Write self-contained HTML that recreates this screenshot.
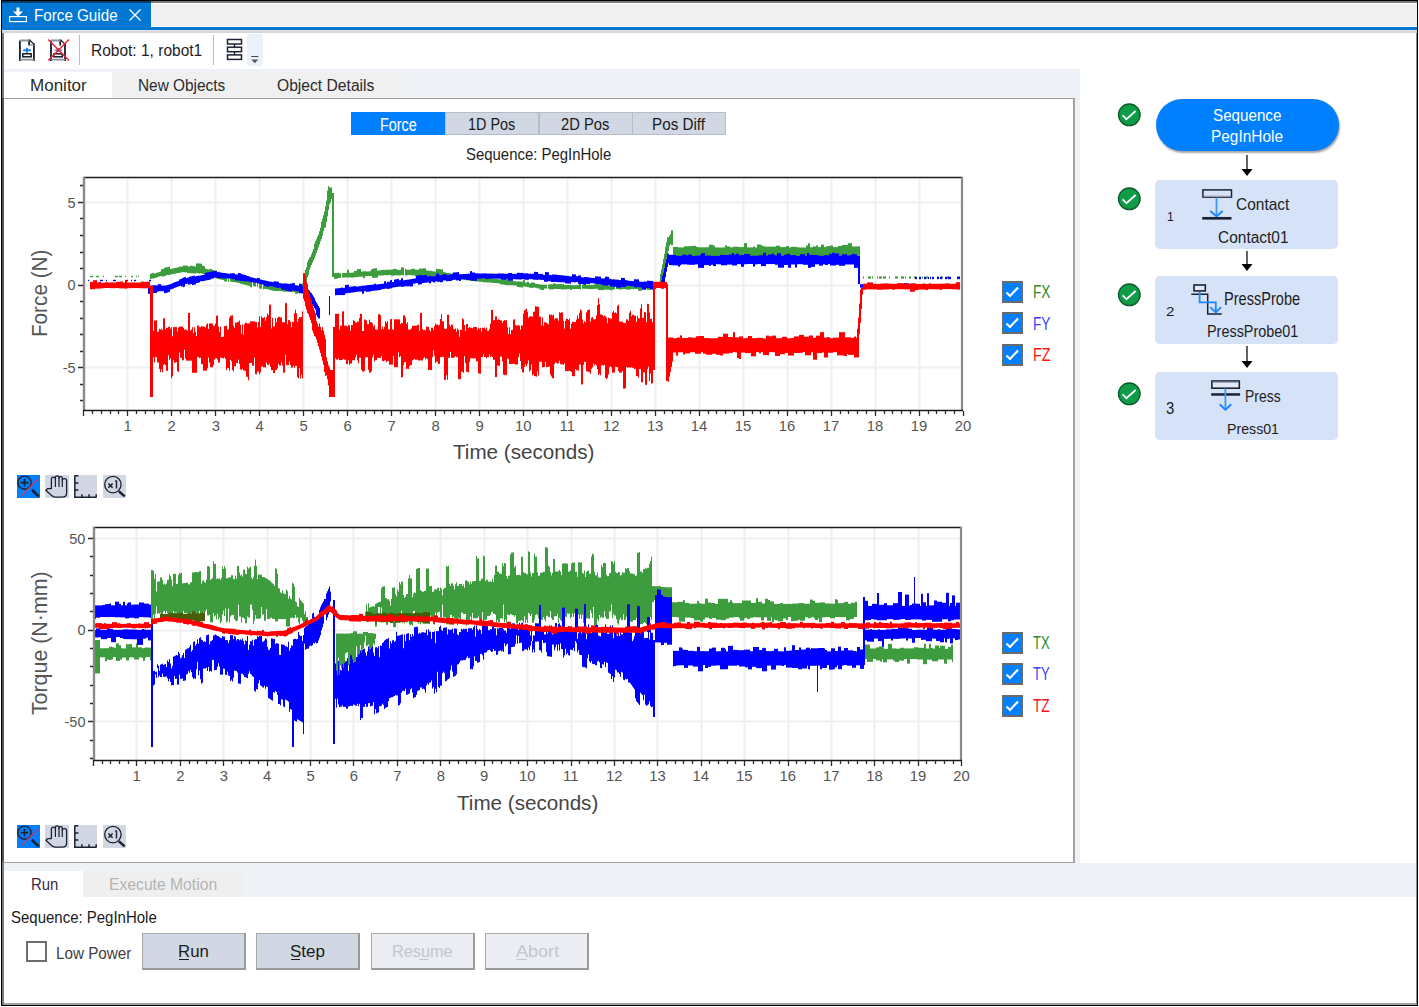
<!DOCTYPE html><html><head><meta charset="utf-8"><style>html,body{margin:0;padding:0}body{width:1419px;height:1007px;position:relative;overflow:hidden;background:#fff;font-family:"Liberation Sans",sans-serif}body>div,body>svg{position:absolute}.t{white-space:nowrap;transform-origin:0 0}</style></head><body><div style="left:2px;top:1px;width:1415px;height:2px;background:#7a7a7a;"></div><div style="left:2px;top:3px;width:1415px;height:24px;background:#ffffff;"></div><div style="left:152px;top:4px;width:1265px;height:22px;background:#f0f0f0;"></div><div style="left:2px;top:1px;width:149px;height:2px;background:#00406e;"></div><div style="left:2px;top:3px;width:149px;height:24px;background:#0078d4;"></div><div style="left:2px;top:27px;width:1415px;height:3px;background:#0078d4;"></div><div style="left:2px;top:30px;width:1415px;height:1px;background:#ece6e3;"></div><div style="left:2px;top:31px;width:1415px;height:2px;background:#d5d6da;"></div><div style="left:1px;top:0px;width:1417px;height:1px;background:#000;"></div><div style="left:1px;top:0px;width:1px;height:1006px;background:#000;"></div><div style="left:1417px;top:0px;width:1px;height:1006px;background:#000;"></div><div style="left:1px;top:1005px;width:1417px;height:1px;background:#000;"></div><div style="left:2px;top:33px;width:2px;height:972px;background:#7b7c80;"></div><div style="left:2px;top:98px;width:2px;height:764px;background:#555555;"></div><div style="left:1416px;top:33px;width:1px;height:972px;background:#8a8a8e;"></div><div style="left:4px;top:1003px;width:1412px;height:2px;background:#a2a3a6;"></div><svg style="left:8px;top:6px" width="20" height="18" viewBox="0 0 20 18"><path d="M8.5 1.5h3v4h3.5l-5 5-5-5h3.5z" fill="#fff"/><rect x="1.6" y="10.6" width="16.8" height="5" fill="none" stroke="#fff" stroke-width="1.2"/><path d="M10 10v1" stroke="#fff"/></svg><div class="t" style="left:33.98px;top:7.46px;font-size:17.30px;line-height:17.30px;color:#ffffff;transform:scaleX(0.8790);">Force Guide</div><svg style="left:127px;top:7px" width="16" height="16" viewBox="0 0 16 16"><path d="M2.5 2.5l11 11M13.5 2.5l-11 11" stroke="#fff" stroke-width="1.3"/></svg><svg style="left:18px;top:38px" width="18" height="24" viewBox="0 0 18 24"><path d="M1.9 2.5v20.5M15.9 5.5v17.5M11.1 1.6v6" stroke="#141c2c" stroke-width="1.8" fill="none"/><path d="M1.9 2.5h10.5M1.9 21.7h14" stroke="#8a909c" stroke-width="1.8" fill="none"/><path d="M11.5 2l4.6 4.4" stroke="#141c2c" stroke-width="1.3"/><path d="M11.1 7.1h4.8" stroke="#8a909c" stroke-width="1.4"/><path d="M9 9.8v5M5.2 12.3h7.7" stroke="#1a80ff" stroke-width="2"/><rect x="4.8" y="15.8" width="8.4" height="3" fill="#fff" stroke="#141c2c" stroke-width="1.5"/></svg><svg style="left:47px;top:38px" width="24" height="24" viewBox="0 0 24 24"><path d="M4 2.5v20.5M18 5.5v17.5M13.2 1.6v6" stroke="#141c2c" stroke-width="1.8" fill="none"/><path d="M4 2.5h10.5M4 21.7h14" stroke="#8a909c" stroke-width="1.8" fill="none"/><path d="M13.6 2l4.6 4.4" stroke="#141c2c" stroke-width="1.3"/><path d="M7.6 12.3h7.7" stroke="#5ab0ff" stroke-width="2"/><rect x="6.9" y="15.8" width="8.4" height="3" fill="#fff" stroke="#141c2c" stroke-width="1.5"/><path d="M1.2 1.5l20.8 21M22 1.5l-20.8 21" stroke="#e8243c" stroke-width="1.5"/><rect x="9.6" y="10.2" width="3.2" height="3.5" fill="#e8243c"/></svg><div style="left:79px;top:35px;width:1px;height:30px;background:#b8bcc4;"></div><div class="t" style="left:90.56px;top:42.77px;font-size:16.57px;line-height:16.57px;color:#1e1e1e;transform:scaleX(0.9361);">Robot: 1, robot1</div><div style="left:213px;top:35px;width:1px;height:30px;background:#b8bcc4;"></div><svg style="left:226px;top:38px" width="18" height="24" viewBox="0 0 18 24"><rect x="1.5" y="1.5" width="14" height="4.5" fill="none" stroke="#1b2233" stroke-width="1.5"/><rect x="1.5" y="9.2" width="14" height="4.5" fill="none" stroke="#1b2233" stroke-width="1.5"/><rect x="1.5" y="16.9" width="14" height="4.5" fill="none" stroke="#1b2233" stroke-width="1.5"/><path d="M8.5 6v3.2M8.5 13.7v3.2" stroke="#1b2233" stroke-width="1.5"/></svg><div style="left:247px;top:34px;width:16px;height:32px;background:#eaf1fb;border-radius:3px"></div><svg style="left:249px;top:55px" width="12" height="10" viewBox="0 0 12 10"><path d="M2.3 1.5h7" stroke="#444" stroke-width="1"/><path d="M2.3 4.6h7l-3.5 3.6z" fill="#555"/></svg><div style="left:4px;top:69px;width:1076px;height:3px;background:#eef1f6;"></div><div style="left:4px;top:72px;width:108px;height:26px;background:#ffffff;"></div><div style="left:112px;top:72px;width:289px;height:26px;background:#f0f0f0;"></div><div style="left:401px;top:72px;width:679px;height:26px;background:#eef1f6;"></div><div class="t" style="left:30.24px;top:76.56px;font-size:17.30px;line-height:17.30px;color:#2b2b2b;transform:scaleX(0.9850);">Monitor</div><div class="t" style="left:138.27px;top:76.56px;font-size:17.30px;line-height:17.30px;color:#2b2b2b;transform:scaleX(0.8907);">New Objects</div><div class="t" style="left:277.22px;top:76.56px;font-size:17.30px;line-height:17.30px;color:#2b2b2b;transform:scaleX(0.9054);">Object Details</div><div style="left:4px;top:98px;width:1071px;height:1px;background:#a0a0a0;"></div><div style="left:1073px;top:98px;width:2px;height:765px;background:#a3a3a3;"></div><div style="left:4px;top:862px;width:1071px;height:1px;background:#a0a0a0;"></div><div style="left:1075px;top:72px;width:5px;height:791px;background:#eef1f6;"></div><div style="left:351px;top:112px;width:94px;height:23px;background:#007fff;"></div><div class="t" style="left:379.85px;top:117.24px;font-size:17.44px;line-height:17.44px;color:#ffffff;transform:scaleX(0.8258);">Force</div><div style="left:445px;top:112px;width:94px;height:23px;background:#d1d7e3;box-sizing:border-box;border:1px solid #b7bcc6"></div><div class="t" style="left:468.05px;top:116.36px;font-size:17.30px;line-height:17.30px;color:#1b1b1b;transform:scaleX(0.8343);">1D Pos</div><div style="left:539px;top:112px;width:94px;height:23px;background:#d1d7e3;box-sizing:border-box;border:1px solid #b7bcc6"></div><div class="t" style="left:561.26px;top:116.36px;font-size:17.30px;line-height:17.30px;color:#1b1b1b;transform:scaleX(0.8518);">2D Pos</div><div style="left:632px;top:112px;width:94px;height:23px;background:#d1d7e3;box-sizing:border-box;border:1px solid #b7bcc6"></div><div class="t" style="left:652.18px;top:116.36px;font-size:17.30px;line-height:17.30px;color:#1b1b1b;transform:scaleX(0.8816);">Pos Diff</div><div class="t" style="left:466.05px;top:145.68px;font-size:17.15px;line-height:17.15px;color:#1e1e1e;transform:scaleX(0.8706);">Sequence: PegInHole</div><div style="left:4px;top:863px;width:1412px;height:8px;background:#eef1f6;"></div><div style="left:4px;top:871px;width:79px;height:26px;background:#ffffff;"></div><div style="left:83px;top:871px;width:160px;height:26px;background:#efefef;"></div><div style="left:243px;top:871px;width:1173px;height:26px;background:#eef1f6;"></div><div class="t" style="left:30.50px;top:877.39px;font-size:15.84px;line-height:15.84px;color:#3a2a4a;transform:scaleX(0.9449);">Run</div><div class="t" style="left:109.24px;top:877.39px;font-size:15.84px;line-height:15.84px;color:#b4b4b4;transform:scaleX(0.9912);">Execute Motion</div><div class="t" style="left:10.55px;top:909.67px;font-size:16.57px;line-height:16.57px;color:#1a1a1a;transform:scaleX(0.9043);">Sequence: PegInHole</div><div style="left:26px;top:941px;width:21px;height:21px;background:transparent;box-sizing:border-box;border:2px solid #6e6e6e"></div><div class="t" style="left:56.48px;top:944.80px;font-size:16.42px;line-height:16.42px;color:#404040;transform:scaleX(0.9290);">Low Power</div><div style="left:142px;top:933px;width:104px;height:37px;background:#d1d7e3;box-sizing:border-box;border:1px solid #a9a9a9;border-right:2px solid #9a9a9a;border-bottom:2px solid #9a9a9a"></div><div style="left:256px;top:933px;width:104px;height:37px;background:#d1d7e3;box-sizing:border-box;border:1px solid #a9a9a9;border-right:2px solid #9a9a9a;border-bottom:2px solid #9a9a9a"></div><div style="left:371px;top:933px;width:104px;height:37px;background:#ebedf2;box-sizing:border-box;border:1px solid #a9a9a9;border-right:2px solid #9a9a9a;border-bottom:2px solid #9a9a9a"></div><div style="left:485px;top:933px;width:104px;height:37px;background:#ebedf2;box-sizing:border-box;border:1px solid #a9a9a9;border-right:2px solid #9a9a9a;border-bottom:2px solid #9a9a9a"></div><div class="t" style="left:178.16px;top:944.35px;font-size:16.72px;line-height:16.72px;color:#1b1b1b;transform:scaleX(1.0054);">Run</div><div class="t" style="left:290.15px;top:944.35px;font-size:16.72px;line-height:16.72px;color:#1b1b1b;transform:scaleX(1.0173);">Step</div><div class="t" style="left:392.20px;top:944.35px;font-size:16.72px;line-height:16.72px;color:#c2c6ce;transform:scaleX(0.9722);">Resume</div><div class="t" style="left:516.00px;top:944.35px;font-size:16.72px;line-height:16.72px;color:#c2c6ce;transform:scaleX(1.0809);">Abort</div><div style="left:179px;top:959px;width:10px;height:1px;background:#1b1b1b;"></div><div style="left:291px;top:959px;width:9px;height:1px;background:#1b1b1b;"></div><div style="left:419px;top:959px;width:9px;height:1px;background:#c2c6ce;"></div><div style="left:516px;top:959px;width:11px;height:1px;background:#c2c6ce;"></div><svg style="left:1117px;top:103px" width="24" height="24" viewBox="0 0 24 24"><circle cx="12.3" cy="11.8" r="10.8" fill="#0e9c46" stroke="#0b5a28" stroke-width="1.3"/><path d="M5.6 12.3l3.8 3.9 9.2-8.2" fill="none" stroke="#fff" stroke-width="1.7"/></svg><div style="left:1156px;top:99px;width:183px;height:52px;background:#0080ff;border-radius:26px;box-shadow:1px 2px 2px rgba(0,0,0,0.35)"></div><div class="t" style="left:1212.74px;top:108.17px;font-size:15.99px;line-height:15.99px;color:#ffffff;transform:scaleX(0.9502);">Sequence</div><div class="t" style="left:1210.77px;top:128.28px;font-size:17.15px;line-height:17.15px;color:#ffffff;transform:scaleX(0.8990);">PegInHole</div><svg style="left:1239.5px;top:155px" width="14" height="22" viewBox="0 0 14 22"><path d="M7 0v16" stroke="#3a3a3a" stroke-width="1.6"/><path d="M1.5 14h11l-5.5 7z" fill="#000"/></svg><div style="left:1155px;top:180px;width:183px;height:69px;background:#d6e2f7;border-radius:5px"></div><div style="left:1155px;top:276px;width:183px;height:68px;background:#d6e2f7;border-radius:5px"></div><div style="left:1155px;top:372px;width:183px;height:68px;background:#d6e2f7;border-radius:5px"></div><svg style="left:1117px;top:187px" width="24" height="24" viewBox="0 0 24 24"><circle cx="12.3" cy="11.8" r="10.8" fill="#0e9c46" stroke="#0b5a28" stroke-width="1.3"/><path d="M5.6 12.3l3.8 3.9 9.2-8.2" fill="none" stroke="#fff" stroke-width="1.7"/></svg><svg style="left:1117px;top:283px" width="24" height="24" viewBox="0 0 24 24"><circle cx="12.3" cy="11.8" r="10.8" fill="#0e9c46" stroke="#0b5a28" stroke-width="1.3"/><path d="M5.6 12.3l3.8 3.9 9.2-8.2" fill="none" stroke="#fff" stroke-width="1.7"/></svg><svg style="left:1117px;top:382px" width="24" height="24" viewBox="0 0 24 24"><circle cx="12.3" cy="11.8" r="10.8" fill="#0e9c46" stroke="#0b5a28" stroke-width="1.3"/><path d="M5.6 12.3l3.8 3.9 9.2-8.2" fill="none" stroke="#fff" stroke-width="1.7"/></svg><svg style="left:1239.5px;top:251px" width="14" height="21" viewBox="0 0 14 21"><path d="M7 0v15" stroke="#3a3a3a" stroke-width="1.6"/><path d="M1.5 13h11l-5.5 7z" fill="#000"/></svg><svg style="left:1239.5px;top:346px" width="14" height="23" viewBox="0 0 14 23"><path d="M7 0v17" stroke="#3a3a3a" stroke-width="1.6"/><path d="M1.5 15h11l-5.5 7z" fill="#000"/></svg><div class="t" style="left:1166.83px;top:210.28px;font-size:13.37px;line-height:13.37px;color:#1b1b2b;transform:scaleX(0.9043);">1</div><svg style="left:1201px;top:188px" width="32" height="32" viewBox="0 0 32 32"><rect x="1.9" y="1.9" width="28.6" height="7.2" fill="#d8e2f6" stroke="#1b2233" stroke-width="1.5"/><path d="M2.6 8.2h27.2" stroke="#a4acbb" stroke-width="1.2"/><path d="M15.5 9.5v18.5" stroke="#3d97ff" stroke-width="1.8"/><path d="M9.3 23l6.2 5.2 6.2-5.2" stroke="#1a86ff" stroke-width="1.9" fill="none"/><path d="M1.2 30.3h29.3" stroke="#1b2233" stroke-width="2.7"/></svg><div class="t" style="left:1235.73px;top:196.97px;font-size:16.57px;line-height:16.57px;color:#1e1e1e;transform:scaleX(0.9346);">Contact</div><div class="t" style="left:1217.93px;top:229.10px;font-size:16.42px;line-height:16.42px;color:#1e1e1e;transform:scaleX(0.9433);">Contact01</div><div class="t" style="left:1166.24px;top:304.93px;font-size:13.08px;line-height:13.08px;color:#1b1b2b;transform:scaleX(1.1633);">2</div><svg style="left:1190px;top:283px" width="34" height="34" viewBox="0 0 34 34"><rect x="4" y="2" width="11.3" height="5.9" fill="#e2e9f8" stroke="#1b2233" stroke-width="1.6"/><path d="M1.3 11.3h16.4V30.9h14.1" fill="none" stroke="#1b2233" stroke-width="1.5"/><path d="M9.6 9v10.3h16.2V30" fill="none" stroke="#1a86ff" stroke-width="1.8"/><path d="M20.2 24.2l5.6 5.3 5.4-5.3" fill="none" stroke="#1a86ff" stroke-width="1.8"/></svg><div class="t" style="left:1224.43px;top:290.99px;font-size:17.73px;line-height:17.73px;color:#1e1e1e;transform:scaleX(0.8227);">PressProbe</div><div class="t" style="left:1206.85px;top:323.73px;font-size:16.86px;line-height:16.86px;color:#1e1e1e;transform:scaleX(0.8548);">PressProbe01</div><div class="t" style="left:1166.40px;top:400.22px;font-size:16.28px;line-height:16.28px;color:#1b1b2b;transform:scaleX(0.9149);">3</div><svg style="left:1210px;top:379px" width="32" height="34" viewBox="0 0 32 34"><rect x="1.9" y="2" width="27.4" height="7.2" fill="#e2e9f8" stroke="#1b2233" stroke-width="1.6"/><path d="M2.6 3.3h26" stroke="#98a2b4" stroke-width="1.2"/><path d="M1.2 15.45h28.9" stroke="#1b2233" stroke-width="2.5"/><path d="M15.4 9.5v21.5" stroke="#3d97ff" stroke-width="1.8"/><path d="M9.6 25.2l5.8 5.6 5.9-5.6" stroke="#1a86ff" stroke-width="1.9" fill="none"/></svg><div class="t" style="left:1244.89px;top:387.92px;font-size:16.28px;line-height:16.28px;color:#1e1e1e;transform:scaleX(0.8560);">Press</div><div class="t" style="left:1226.67px;top:420.53px;font-size:15.55px;line-height:15.55px;color:#1e1e1e;transform:scaleX(0.9118);">Press01</div><svg style="left:0;top:0" width="1419" height="1007" viewBox="0 0 1419 1007" font-family="Liberation Sans, sans-serif"><path d="M127.5 178V410M171.5 178V410M215.5 178V410M259.5 178V410M303.5 178V410M347.5 178V410M391.5 178V410M435.5 178V410M479.5 178V410M523.5 178V410M567.5 178V410M611.5 178V410M655.5 178V410M699.5 178V410M743.5 178V410M787.5 178V410M831.5 178V410M875.5 178V410M919.5 178V410M85 202.5H962M85 285.5H962M85 367.5H962" stroke="#efefef" stroke-width="2" fill="none"/><path d="M90.5 275.8V277.2M91.5 275.8V277.2M92.5 275.8V277.2M96.5 275.8V277.2M97.5 275.8V277.2M98.5 275.8V277.2M103.5 275.8V277.2M115.5 275.8V277.2M116.5 275.8V277.2M117.5 275.8V277.2M119.5 275.8V277.2M120.5 275.8V277.2M121.5 275.8V277.2M125.5 275.8V277.2M131.5 275.8V277.2M132.5 275.8V277.2M136.5 275.8V277.2M138.5 275.8V277.2M150.5 273.9V279.1M151.5 273.5V278.8M152.5 273.1V278.5M153.5 272.7V278.5M154.5 273.7V278.2M155.5 273.3V277.9M156.5 272.9V277.6M157.5 272.5V277.3M158.5 272.4V276.7M159.5 272.0V276.4M160.5 271.6V276.1M161.5 269.4V276.0M162.5 269.1V276.6M163.5 268.9V276.4M164.5 267.8V276.2M165.5 267.5V276.1M166.5 267.3V275.2M167.5 267.1V275.0M168.5 266.8V275.1M169.5 266.6V274.9M170.5 269.0V274.7M171.5 268.8V274.3M172.5 268.6V274.2M173.5 268.4V274.0M174.5 268.1V273.8M175.5 267.9V273.6M176.5 267.8V273.3M177.5 267.5V273.1M178.5 267.3V272.9M179.5 266.7V272.8M180.5 266.4V272.6M181.5 266.9V272.4M182.5 266.6V272.3M183.5 265.5V272.1M184.5 265.5V272.2M185.5 265.5V272.3M186.5 265.6V272.3M187.5 265.6V273.0M188.5 266.6V273.1M189.5 266.6V273.1M190.5 265.7V273.2M191.5 265.7V273.3M192.5 265.7V273.4M193.5 266.3V273.4M194.5 266.4V273.5M195.5 266.4V273.5M196.5 263.4V273.1M197.5 263.4V273.1M198.5 263.4V273.5M199.5 263.5V273.6M200.5 263.5V273.2M201.5 263.8V273.5M202.5 265.5V273.8M203.5 265.9V274.0M204.5 266.2V274.3M205.5 268.6V274.6M206.5 268.9V274.9M207.5 269.2V275.2M208.5 269.6V275.9M209.5 268.7V276.2M210.5 269.0V276.4M211.5 269.3V276.4M212.5 269.8V276.7M213.5 270.1V277.0M214.5 270.5V277.2M215.5 271.7V278.2M216.5 272.0V278.4M217.5 272.3V278.6M218.5 271.6V279.1M219.5 271.9V279.3M220.5 273.1V279.5M221.5 273.3V279.7M222.5 273.6V279.9M223.5 273.9V280.1M224.5 274.2V281.3M225.5 274.5V281.5M226.5 274.6V281.7M228.5 275.2V282.1M230.5 275.7V281.6M231.5 276.0V281.8M232.5 274.0V282.0M233.5 274.2V282.2M234.5 274.5V282.1M235.5 274.8V282.3M236.5 277.6V282.5M237.5 277.9V282.7M238.5 278.2V282.9M239.5 278.5V283.1M240.5 278.8V283.7M241.5 279.0V283.9M242.5 279.0V284.2M243.5 279.2V284.4M244.5 279.4V284.6M245.5 279.6V284.9M246.5 279.9V285.1M247.5 280.1V285.4M248.5 280.3V285.6M249.5 280.5V285.8M250.5 280.7V287.2M251.5 280.9V287.4M253.5 281.4V286.2M254.5 281.6V286.4M255.5 281.4V286.6M257.5 281.8V287.1M259.5 282.3V288.5M260.5 282.5V288.7M261.5 283.3V288.9M263.5 283.8V289.4M264.5 284.3V288.8M265.5 284.5V289.0M266.5 284.8V289.2M267.5 285.0V289.2M268.5 285.3V289.4M269.5 283.9V289.9M270.5 284.2V290.1M271.5 284.4V290.3M272.5 285.4V290.6M273.5 285.7V290.9M274.5 285.8V290.9M275.5 285.8V291.0M276.5 285.3V291.1M277.5 285.3V291.1M278.5 286.7V291.1M279.5 286.8V291.0M280.5 285.9V291.1M281.5 286.0V291.2M282.5 286.0V291.2M283.5 286.1V291.7M284.5 286.2V291.7M285.5 286.8V291.8M286.5 286.9V291.8M287.5 287.0V291.6M288.5 287.1V291.7M289.5 287.2V291.7M290.5 287.7V291.8M291.5 287.8V291.7M292.5 287.9V291.8M293.5 288.0V291.9M294.5 287.7V291.9M295.5 287.8V293.8M296.5 287.9V293.8M297.5 288.5V293.9M298.5 287.6V293.0M299.5 286.7V293.1M300.5 285.7V292.3M301.5 284.8V291.5M302.5 283.3V289.1M303.5 277.0V288.6M304.5 273.3V288.6M305.5 269.7V285.0M306.5 267.3V281.0M307.5 262.1V277.4M308.5 259.8V275.0M309.5 257.5V269.9M310.5 256.7V267.5M311.5 254.4V265.0M312.5 251.7V262.7M313.5 249.1V260.3M314.5 243.8V258.2M315.5 241.2V255.5M316.5 239.2V252.8M317.5 236.6V250.2M318.5 234.5V247.3M319.5 231.2V244.6M320.5 227.8V241.3M321.5 221.9V239.1M322.5 218.6V235.7M323.5 215.3V231.2M324.5 211.7V227.8M325.5 206.2V227.5M326.5 200.7V222.0M327.5 190.5V216.5M328.5 186.0V210.0M329.5 187.5V204.5M330.5 187.5V202.5M331.5 187.5V199.0M332.5 193.0V277.0M333.5 193.0V277.0M334.5 273.0V278.9M335.5 273.0V278.8M336.5 272.9V278.8M337.5 272.8V278.7M338.5 272.7V278.0M339.5 273.3V278.0M340.5 273.2V277.7M342.5 273.1V277.6M343.5 273.0V277.5M344.5 272.9V277.5M345.5 273.1V277.4M346.5 273.0V277.6M347.5 269.9V277.5M348.5 269.8V277.4M349.5 272.8V277.4M350.5 272.7V277.3M351.5 272.7V277.7M352.5 272.6V277.7M353.5 272.5V277.6M354.5 271.0V277.3M355.5 270.9V277.2M356.5 270.8V277.1M357.5 269.1V277.1M358.5 269.0V276.8M359.5 268.9V276.8M360.5 268.9V276.7M361.5 271.5V276.6M362.5 271.4V276.6M363.5 271.4V278.2M364.5 271.3V278.2M365.5 271.2V276.2M366.5 271.5V276.1M367.5 271.5V276.0M368.5 271.4V276.1M369.5 271.3V276.0M370.5 271.2V275.9M371.5 269.2V275.9M372.5 269.1V278.0M373.5 268.5V277.9M374.5 268.4V277.8M375.5 268.3V277.8M376.5 268.3V277.7M377.5 270.6V277.6M378.5 270.5V275.6M379.5 270.5V275.5M380.5 270.4V275.5M381.5 270.0V275.5M382.5 269.9V275.5M383.5 269.9V275.5M384.5 269.9V275.2M385.5 269.9V275.2M386.5 269.9V275.2M387.5 269.7V275.2M388.5 269.7V275.1M389.5 269.7V275.1M390.5 269.7V275.1M391.5 269.7V275.7M392.5 269.6V275.7M393.5 268.9V275.7M394.5 268.9V275.4M395.5 268.9V275.4M396.5 268.9V275.4M397.5 269.9V275.4M398.5 269.9V275.4M399.5 269.9V275.4M400.5 269.9V275.2M401.5 267.4V275.2M402.5 267.4V275.2M403.5 267.4V275.4M405.5 268.7V275.4M406.5 269.7V275.4M407.5 269.7V275.4M408.5 269.7V275.1M409.5 269.7V275.1M410.5 269.7V275.1M411.5 268.8V275.1M412.5 268.8V275.4M413.5 268.8V275.4M414.5 268.7V275.4M415.5 269.7V276.6M416.5 269.7V276.6M417.5 269.7V276.6M418.5 269.7V276.6M419.5 268.5V276.6M420.5 268.5V275.3M421.5 268.6V275.4M422.5 268.7V275.9M423.5 268.2V276.0M424.5 268.3V276.1M425.5 268.4V276.2M426.5 270.4V276.3M427.5 270.6V277.0M428.5 270.7V277.1M429.5 270.8V277.2M430.5 270.8V277.3M431.5 270.9V277.4M432.5 271.3V277.5M433.5 271.4V276.4M434.5 271.5V276.5M435.5 271.6V276.6M436.5 268.8V277.4M437.5 268.9V277.5M438.5 269.0V277.8M439.5 269.1V277.9M440.5 269.2V278.0M441.5 269.4V278.1M442.5 269.5V278.2M443.5 272.1V278.3M444.5 272.2V277.7M445.5 272.3V277.8M446.5 272.9V277.9M447.5 273.0V278.0M448.5 273.1V279.9M449.5 273.3V280.0M450.5 273.4V280.1M452.5 273.1V280.3M454.5 273.4V278.9M455.5 273.5V279.0M456.5 274.0V279.1M457.5 274.1V279.8M458.5 274.3V279.9M459.5 274.4V279.1M460.5 274.5V279.2M461.5 274.6V279.3M462.5 274.0V279.4M463.5 274.2V279.5M464.5 274.3V280.0M465.5 274.4V280.1M466.5 274.5V280.2M467.5 274.6V280.3M468.5 274.5V280.4M469.5 274.6V280.7M470.5 273.4V280.8M471.5 273.5V280.9M472.5 273.6V280.9M473.5 273.7V281.0M474.5 275.3V281.2M475.5 275.4V281.3M476.5 274.2V281.4M477.5 274.3V281.4M478.5 274.5V281.5M479.5 274.6V281.7M480.5 274.7V281.8M481.5 277.3V281.9M482.5 277.4V282.0M483.5 277.5V282.3M484.5 277.7V282.4M485.5 277.9V282.3M486.5 278.0V282.4M487.5 278.1V282.5M488.5 277.2V282.6M489.5 277.3V282.4M490.5 277.4V282.5M491.5 277.5V282.7M492.5 278.4V282.8M493.5 278.5V282.9M494.5 278.8V283.1M495.5 278.9V283.0M496.5 279.0V283.2M497.5 279.2V283.3M498.5 279.3V283.4M499.5 279.3V283.5M500.5 279.4V284.3M501.5 279.6V284.4M502.5 279.7V284.5M503.5 280.0V284.6M504.5 280.1V284.8M505.5 277.9V285.0M506.5 278.0V285.1M507.5 278.1V285.2M508.5 278.3V285.0M509.5 280.4V285.2M510.5 280.5V285.3M511.5 280.7V285.1M512.5 281.0V285.2M513.5 281.1V285.3M514.5 281.3V285.4M515.5 281.4V285.5M516.5 281.5V285.7M517.5 281.6V286.9M518.5 281.3V287.0M519.5 281.4V287.2M520.5 281.5V287.3M521.5 281.7V287.4M522.5 281.8V287.5M523.5 280.0V286.4M524.5 280.1V286.5M525.5 282.6V286.7M526.5 282.7V286.8M527.5 281.6V287.0M528.5 281.8V287.1M529.5 283.3V287.7M530.5 283.5V287.8M531.5 282.3V287.9M532.5 282.5V288.1M533.5 282.6V287.5M534.5 282.7V287.6M535.5 283.8V287.7M536.5 283.9V287.8M537.5 284.1V288.4M538.5 284.2V288.5M539.5 284.3V288.7M540.5 284.5V289.8M541.5 284.6V289.9M542.5 284.7V290.0M543.5 284.7V290.0M544.5 284.7V288.6M545.5 284.7V288.6M546.5 284.8V288.7M548.5 284.8V288.7M549.5 284.3V289.4M550.5 284.3V289.4M551.5 284.3V289.4M552.5 284.3V289.4M553.5 283.4V289.4M554.5 283.4V288.9M555.5 283.5V288.9M556.5 284.2V289.1M557.5 284.2V289.1M558.5 284.1V289.1M559.5 284.1V289.1M560.5 284.1V289.1M561.5 284.1V289.4M562.5 284.1V289.4M563.5 284.1V289.4M564.5 285.0V289.4M565.5 285.0V289.4M566.5 285.0V289.4M567.5 285.0V288.9M568.5 285.0V288.9M569.5 284.9V288.9M570.5 284.9V289.9M571.5 285.2V289.9M572.5 285.2V288.9M573.5 285.2V288.9M574.5 285.2V289.0M575.5 285.3V289.0M576.5 285.3V289.0M577.5 284.9V289.0M578.5 285.0V289.0M579.5 283.5V289.0M580.5 283.5V289.5M582.5 284.7V288.8M583.5 284.7V288.8M584.5 282.2V288.8M585.5 282.2V288.8M586.5 284.9V288.8M587.5 284.9V288.8M588.5 284.9V289.1M589.5 284.9V289.1M590.5 284.8V289.1M591.5 284.8V289.1M592.5 284.8V289.1M593.5 284.8V289.1M594.5 284.8V288.8M595.5 283.9V288.8M596.5 283.9V288.8M597.5 283.9V288.8M598.5 283.9V290.1M599.5 283.9V290.1M600.5 282.8V290.1M601.5 282.8V290.1M602.5 285.2V290.1M603.5 285.2V290.2M604.5 285.2V289.6M605.5 285.2V289.6M606.5 285.2V289.7M607.5 285.2V289.7M608.5 285.3V289.7M609.5 285.3V289.7M610.5 285.1V290.1M611.5 285.1V290.1M612.5 285.1V290.1M613.5 285.1V289.3M614.5 285.4V289.3M616.5 285.3V289.0M617.5 285.4V289.0M618.5 285.4V289.4M619.5 285.4V289.4M620.5 285.6V289.5M621.5 285.7V289.5M622.5 285.7V289.2M623.5 285.7V289.2M624.5 285.7V289.0M625.5 285.7V289.0M626.5 285.7V289.6M627.5 285.7V289.6M628.5 285.7V289.6M629.5 285.8V289.6M630.5 285.8V289.6M631.5 285.8V289.0M632.5 285.4V289.1M633.5 285.4V289.1M634.5 285.4V288.9M635.5 285.4V288.9M636.5 285.4V288.9M637.5 285.4V288.9M638.5 285.4V290.8M639.5 285.4V290.8M640.5 285.4V290.8M641.5 285.4V290.8M642.5 285.4V289.1M643.5 285.8V289.1M644.5 285.8V289.1M645.5 285.8V289.1M646.5 285.8V289.1M647.5 285.8V289.9M648.5 284.5V289.9M649.5 284.5V289.9M650.5 284.5V289.9M651.5 284.5V289.7M652.5 284.5V289.7M653.5 284.9V289.7M654.5 284.4V289.0M655.5 283.8V288.6M656.5 284.3V288.2M657.5 283.7V287.7M658.5 282.3V287.3M659.5 281.7V286.9M660.5 274.0V286.5M661.5 269.3V286.5M662.5 264.5V279.0M663.5 258.9V274.2M664.5 253.9V269.5M665.5 247.2V266.3M666.5 242.2V261.3M667.5 237.2V255.9M668.5 237.4V250.9M669.5 235.7V245.9M670.5 234.1V244.2M671.5 230.4V245.1M672.5 230.4V245.1M673.5 246.9V256.5M674.5 246.9V256.5M675.5 246.9V257.4M676.5 246.9V257.4M677.5 246.9V257.4M678.5 247.4V256.4M679.5 247.4V258.3M680.5 247.4V258.3M681.5 247.4V258.3M682.5 247.4V258.3M683.5 247.4V256.8M684.5 246.3V256.8M685.5 246.3V256.8M686.5 246.3V256.8M687.5 246.3V256.8M688.5 246.3V256.8M689.5 246.1V257.3M690.5 246.1V257.3M691.5 246.1V257.3M692.5 245.8V256.7M693.5 245.8V256.7M694.5 245.8V256.7M695.5 245.8V256.7M696.5 246.8V259.4M697.5 246.8V259.4M698.5 247.3V259.4M699.5 247.3V259.4M700.5 247.3V259.4M701.5 247.3V259.4M702.5 247.3V257.8M703.5 247.3V257.8M704.5 247.3V257.8M705.5 247.3V257.8M706.5 247.2V257.8M707.5 247.2V257.8M708.5 247.2V259.7M709.5 244.7V259.7M710.5 244.7V259.7M711.5 244.7V259.7M712.5 244.7V259.7M713.5 245.5V257.4M714.5 245.5V257.4M715.5 247.4V257.4M716.5 247.4V257.4M717.5 247.4V257.4M718.5 247.4V256.5M719.5 247.5V256.5M720.5 247.5V256.5M721.5 247.5V256.5M722.5 247.5V256.7M723.5 247.5V256.7M724.5 247.5V256.7M725.5 245.4V256.7M726.5 245.4V256.7M727.5 246.4V257.2M728.5 246.4V257.2M729.5 246.4V257.2M730.5 247.3V257.2M731.5 247.3V257.2M732.5 247.3V256.6M733.5 246.7V257.8M734.5 246.7V257.8M735.5 246.7V259.0M736.5 246.7V259.0M737.5 246.7V259.0M738.5 246.7V259.0M739.5 247.1V256.6M740.5 247.1V256.6M741.5 247.1V256.6M742.5 247.1V256.7M743.5 247.1V256.7M744.5 243.2V258.4M745.5 243.2V258.4M746.5 243.2V258.4M747.5 247.4V258.4M748.5 247.4V258.4M749.5 247.4V258.4M750.5 247.4V256.6M751.5 247.4V256.6M752.5 247.4V256.6M753.5 246.6V256.6M754.5 246.6V258.3M755.5 247.5V258.3M756.5 247.5V258.3M757.5 244.5V258.3M758.5 244.5V258.2M759.5 244.5V257.0M760.5 244.5V257.0M761.5 245.5V257.0M762.5 245.5V257.0M763.5 246.3V257.0M764.5 246.3V256.6M765.5 246.7V256.6M766.5 246.7V256.8M767.5 246.7V256.8M768.5 246.7V256.8M769.5 246.7V256.8M770.5 246.6V257.1M771.5 246.6V257.1M772.5 246.6V257.6M773.5 246.6V257.6M774.5 246.6V257.6M775.5 246.6V257.6M776.5 245.7V256.6M777.5 245.7V256.6M778.5 245.7V256.6M779.5 245.7V256.8M780.5 247.1V256.9M781.5 247.1V256.9M782.5 247.1V256.9M783.5 247.1V256.9M784.5 247.1V256.9M785.5 247.1V258.2M786.5 246.1V258.2M787.5 246.1V258.2M788.5 246.1V256.6M789.5 247.4V256.6M790.5 247.4V256.7M791.5 246.8V257.3M792.5 246.8V257.3M793.5 246.8V257.3M794.5 246.8V257.3M795.5 246.8V257.3M796.5 246.8V257.3M797.5 247.4V257.3M798.5 247.4V257.3M799.5 247.4V258.4M800.5 247.5V258.4M801.5 247.5V258.4M802.5 247.5V258.4M803.5 247.5V258.9M804.5 247.5V258.9M805.5 247.5V256.8M806.5 245.5V256.8M807.5 245.5V258.8M808.5 243.3V258.8M809.5 243.3V257.6M810.5 247.3V258.4M811.5 247.3V258.4M812.5 247.3V258.4M813.5 246.5V257.6M814.5 246.5V257.3M815.5 246.5V257.3M816.5 245.5V257.3M817.5 245.5V257.0M818.5 247.1V257.0M819.5 247.1V257.7M820.5 247.1V257.7M821.5 244.6V257.7M822.5 244.6V257.7M823.5 244.6V257.7M824.5 247.1V257.7M825.5 247.1V258.3M826.5 246.2V258.3M827.5 246.2V258.3M828.5 246.2V258.3M829.5 246.2V258.3M830.5 245.5V258.3M831.5 245.5V257.2M832.5 245.5V257.2M833.5 247.1V257.3M834.5 247.1V257.3M835.5 247.1V257.3M836.5 247.1V256.9M837.5 247.1V257.0M838.5 246.0V257.0M839.5 246.0V257.0M840.5 246.0V257.0M841.5 246.0V257.0M842.5 244.9V257.0M843.5 244.9V257.0M844.5 244.9V257.0M845.5 244.9V257.0M846.5 244.9V257.0M847.5 244.9V257.0M848.5 243.2V258.3M849.5 243.2V258.3M850.5 243.2V258.3M851.5 243.2V258.3M852.5 246.5V258.3M853.5 246.5V257.6M854.5 246.5V257.6M855.5 246.4V257.6M856.5 246.4V257.6M857.5 246.4V257.6M858.5 246.4V257.1M859.5 246.4V257.1M863.5 276.4V278.6M868.5 276.4V278.6M869.5 276.4V278.6M870.5 276.4V278.6M872.5 276.4V278.6M877.5 276.4V278.6M879.5 276.4V278.6M880.5 276.4V278.6M881.5 276.4V278.6M883.5 276.4V278.6M884.5 276.4V278.6M885.5 276.4V278.6M889.5 276.4V278.6M895.5 276.4V278.6M896.5 276.4V278.6M897.5 276.4V278.6M901.5 276.4V278.6M902.5 276.4V278.6M903.5 276.4V278.6M905.5 276.4V278.6M909.5 276.4V278.6M910.5 276.4V278.6M914.5 276.4V278.6M915.5 276.4V278.6M922.5 276.4V278.6M926.5 276.4V278.6M927.5 276.4V278.6M937.5 276.4V278.6M941.5 276.4V278.6M942.5 276.4V278.6M947.5 276.4V278.6M948.5 276.4V278.6M957.5 276.4V278.6M958.5 276.4V278.6M959.5 276.4V278.6" stroke="#3d9c3d" stroke-width="1" fill="none" opacity="1"/><path d="M88.5 279.8V281.2M100.5 279.8V281.2M101.5 279.8V281.2M102.5 279.8V281.2M106.5 279.8V281.2M113.5 279.8V281.2M114.5 279.8V281.2M115.5 279.8V281.2M127.5 279.8V281.2M131.5 279.8V281.2M134.5 279.8V281.2M135.5 279.8V281.2M149.5 279.8V281.2M150.5 279.8V281.2M148.5 285.5V293.9M149.5 285.5V293.9M150.5 285.5V291.6M151.5 285.5V291.6M152.5 285.3V293.0M153.5 285.3V293.0M154.5 285.3V293.0M155.5 285.3V293.0M156.5 285.3V293.0M157.5 285.3V291.6M158.5 284.1V291.6M159.5 284.1V291.2M160.5 284.1V291.2M161.5 285.6V291.2M162.5 285.6V291.2M163.5 285.6V291.2M164.5 285.6V293.2M165.5 285.6V293.2M166.5 285.2V292.9M167.5 285.1V292.5M168.5 284.8V292.2M169.5 284.4V291.8M170.5 284.1V289.5M171.5 283.7V289.2M172.5 283.4V288.8M173.5 282.7V288.5M174.5 282.3V288.1M175.5 282.0V287.5M176.5 281.6V287.2M177.5 281.3V286.8M178.5 280.9V286.5M179.5 279.5V286.1M180.5 279.2V285.8M181.5 278.8V286.7M182.5 278.0V286.3M183.5 277.6V287.2M184.5 277.3V286.8M185.5 276.9V284.1M186.5 278.0V283.8M187.5 277.8V283.6M188.5 277.5V284.7M189.5 276.7V284.5M190.5 276.5V284.2M191.5 276.3V284.0M192.5 276.0V285.1M193.5 275.8V284.9M194.5 275.6V284.6M195.5 276.4V284.4M196.5 276.1V283.1M197.5 275.9V282.9M198.5 275.7V282.7M199.5 275.7V282.4M200.5 275.5V281.3M201.5 275.3V281.1M202.5 275.0V281.3M203.5 274.8V281.1M204.5 274.6V280.9M205.5 272.8V280.6M206.5 272.6V280.4M207.5 272.4V280.2M208.5 272.1V280.1M209.5 272.1V279.8M210.5 271.8V279.6M211.5 271.6V278.8M212.5 271.4V278.6M213.5 271.1V278.4M214.5 271.2V277.6M215.5 270.7V277.6M216.5 270.8V277.7M217.5 272.2V278.1M218.5 272.3V278.1M219.5 272.4V278.2M220.5 272.5V278.2M221.5 272.6V278.3M222.5 272.8V278.3M223.5 272.9V278.4M224.5 273.0V278.5M225.5 273.1V278.5M226.5 273.2V278.4M227.5 273.6V278.5M228.5 273.7V278.5M229.5 273.8V278.6M230.5 273.3V278.6M231.5 273.4V278.7M232.5 273.2V279.1M233.5 273.3V279.2M234.5 273.4V279.3M235.5 274.5V280.4M236.5 274.5V280.5M237.5 274.6V280.5M238.5 273.0V280.6M239.5 273.1V280.6M240.5 273.2V280.9M241.5 274.1V281.1M242.5 274.4V280.8M243.5 274.6V281.0M244.5 274.8V281.3M245.5 275.1V281.2M246.5 275.7V281.4M247.5 276.0V281.2M248.5 276.2V281.4M249.5 276.4V281.7M250.5 277.1V281.9M251.5 277.3V282.1M252.5 277.6V282.4M253.5 277.8V282.5M254.5 278.0V282.7M255.5 278.3V282.6M256.5 278.5V282.8M257.5 277.8V283.1M258.5 278.1V283.5M259.5 278.3V283.7M260.5 279.5V283.9M261.5 279.7V284.2M262.5 280.0V284.4M263.5 280.2V284.6M264.5 280.3V286.0M265.5 280.6V286.2M266.5 280.8V286.4M267.5 281.0V286.7M268.5 281.3V286.9M269.5 281.5V286.0M270.5 281.6V286.2M271.5 281.7V286.4M272.5 281.9V286.5M273.5 282.0V286.7M274.5 281.2V286.9M275.5 281.3V287.5M276.5 281.5V287.7M277.5 281.6V287.8M278.5 281.7V288.0M279.5 283.1V287.6M280.5 283.2V287.7M281.5 283.4V289.4M282.5 283.5V289.5M283.5 283.6V289.7M284.5 283.3V289.9M285.5 283.4V290.0M286.5 283.6V290.8M287.5 283.7V291.0M288.5 283.8V291.2M289.5 284.0V291.3M290.5 283.5V291.5M291.5 283.6V291.7M292.5 283.0V290.4M293.5 283.1V290.6M294.5 283.3V290.8M295.5 285.2V290.9M296.5 285.3V291.2M297.5 285.5V291.4M298.5 285.7V291.4M299.5 283.6V293.2M300.5 283.8V293.3M301.5 284.1V293.4M302.5 285.9V293.5M303.5 284.0V291.2M304.5 284.0V292.2M305.5 287.5V293.2M306.5 288.5V299.1M307.5 289.5V300.1M308.5 289.5V298.3M309.5 290.5V300.0M310.5 292.2V301.6M311.5 293.1V303.3M312.5 294.7V304.6M313.5 296.4V306.3M314.5 298.1V308.0M315.5 300.8V309.6M316.5 302.5V315.1M317.5 304.3V316.8M318.5 306.0V318.4M319.5 307.7V318.4M329.5 296.0V315.0M335.5 288.5V295.3M336.5 288.4V295.2M337.5 288.3V295.1M338.5 288.2V295.0M339.5 288.1V295.2M340.5 288.0V295.1M341.5 287.6V295.0M342.5 287.5V295.2M343.5 287.9V295.1M344.5 287.8V295.0M345.5 285.0V293.5M346.5 284.9V293.4M347.5 284.8V293.1M348.5 284.7V293.0M349.5 287.0V293.0M350.5 286.6V292.9M351.5 286.5V292.6M352.5 286.4V292.5M353.5 286.3V292.4M354.5 286.2V292.3M355.5 286.1V292.0M356.5 286.6V291.9M357.5 286.5V291.8M358.5 286.4V291.7M359.5 286.3V291.6M360.5 286.2V291.6M361.5 285.9V291.5M362.5 285.8V293.8M363.5 285.7V293.7M364.5 285.6V291.3M365.5 285.5V291.2M366.5 285.2V291.9M367.5 285.1V291.8M368.5 285.0V291.7M369.5 284.9V291.6M370.5 284.8V291.5M371.5 284.8V291.0M372.5 284.7V290.9M373.5 284.6V290.8M374.5 283.8V290.7M375.5 283.7V290.6M376.5 284.5V290.5M377.5 284.4V290.3M378.5 284.2V290.2M379.5 284.1V290.1M380.5 284.0V290.0M381.5 283.9V289.4M382.5 283.8V289.2M383.5 283.7V289.1M384.5 281.3V288.9M385.5 281.2V288.7M386.5 283.1V288.5M387.5 281.9V289.0M388.5 281.8V288.9M389.5 281.6V288.7M390.5 280.2V288.5M391.5 280.0V288.3M392.5 282.1V287.6M393.5 281.9V287.4M394.5 279.6V287.3M395.5 279.4V287.1M396.5 279.2V286.9M397.5 279.1V286.9M398.5 278.9V286.7M399.5 280.3V286.6M400.5 280.1V286.4M401.5 278.3V287.0M402.5 278.1V286.8M403.5 280.4V286.7M404.5 280.2V286.5M405.5 280.0V286.3M406.5 279.8V286.1M407.5 279.7V286.4M408.5 279.6V286.3M409.5 279.4V286.1M410.5 279.2V286.7M411.5 279.1V286.5M412.5 278.9V286.3M413.5 278.7V283.7M414.5 278.5V283.6M415.5 278.3V283.4M416.5 275.8V283.2M417.5 275.6V283.0M418.5 275.4V284.7M419.5 275.2V284.5M420.5 275.1V284.3M421.5 275.0V284.2M422.5 275.4V283.1M423.5 275.3V283.0M424.5 275.2V282.9M425.5 275.1V282.8M426.5 275.1V282.7M427.5 276.4V282.5M428.5 276.3V282.5M429.5 276.2V283.4M430.5 276.1V283.3M431.5 276.1V281.7M432.5 276.3V281.7M433.5 276.2V282.5M434.5 276.1V282.4M435.5 276.1V281.5M436.5 273.6V281.4M437.5 273.5V281.9M438.5 273.5V281.8M439.5 275.2V281.8M440.5 275.2V282.3M441.5 275.1V282.3M442.5 275.0V282.2M443.5 274.1V280.6M444.5 274.0V280.5M445.5 273.9V280.4M446.5 275.0V281.3M447.5 274.9V281.2M448.5 274.9V281.1M449.5 274.8V281.1M450.5 274.2V281.0M451.5 274.1V280.9M452.5 274.1V280.0M453.5 272.5V279.9M454.5 272.4V279.8M455.5 272.4V279.7M456.5 272.3V280.5M457.5 272.2V280.4M458.5 272.1V280.3M459.5 274.4V281.0M460.5 274.3V280.9M461.5 274.2V279.5M462.5 274.2V279.4M463.5 274.1V279.4M464.5 274.0V279.3M465.5 274.0V279.2M466.5 273.9V280.1M467.5 273.8V280.0M468.5 273.7V279.9M469.5 273.7V279.9M470.5 271.2V280.0M471.5 271.1V280.8M472.5 272.5V280.7M473.5 272.5V280.8M474.5 272.5V280.8M475.5 273.3V280.8M476.5 273.3V280.8M477.5 273.3V278.6M478.5 273.5V278.7M479.5 273.5V278.7M480.5 273.5V278.7M481.5 273.5V278.7M482.5 273.4V278.2M483.5 273.4V278.2M484.5 273.4V278.2M485.5 273.4V279.1M486.5 273.4V279.1M487.5 273.6V279.1M488.5 273.6V278.8M489.5 273.6V278.8M490.5 273.6V278.6M491.5 273.6V278.6M492.5 273.6V278.6M493.5 273.7V278.7M494.5 273.7V278.7M495.5 273.7V278.7M496.5 273.7V278.7M497.5 273.7V278.7M498.5 273.4V278.8M499.5 273.4V278.8M500.5 273.5V278.8M501.5 273.5V279.8M502.5 273.5V279.8M503.5 273.5V279.8M504.5 273.7V279.9M505.5 273.8V279.9M506.5 273.8V278.7M507.5 273.8V278.7M508.5 273.0V280.7M509.5 273.0V280.7M510.5 273.0V280.7M511.5 273.0V280.8M512.5 273.8V280.8M513.5 273.8V279.2M514.5 273.8V279.2M515.5 273.8V279.3M516.5 273.9V279.4M517.5 272.8V279.4M518.5 272.8V279.4M519.5 272.8V279.5M520.5 272.9V279.5M521.5 272.9V279.5M522.5 272.9V279.0M523.5 273.3V279.1M524.5 273.3V279.7M525.5 273.3V279.7M526.5 273.3V279.8M527.5 273.3V279.8M528.5 273.7V279.8M529.5 273.7V279.1M530.5 273.7V279.2M531.5 273.8V279.2M532.5 273.8V279.3M533.5 273.8V279.7M534.5 271.8V279.7M535.5 271.9V279.8M536.5 271.9V279.9M537.5 272.0V279.9M538.5 273.8V279.7M539.5 273.8V279.7M540.5 273.8V279.8M541.5 273.9V279.9M542.5 274.0V279.9M543.5 274.8V280.0M544.5 274.9V281.8M545.5 272.1V281.8M546.5 272.1V281.7M547.5 272.2V281.8M548.5 272.3V281.1M549.5 274.9V281.2M550.5 275.0V281.3M551.5 275.1V282.0M552.5 274.5V282.0M553.5 274.5V282.1M554.5 274.6V281.9M555.5 274.5V282.0M556.5 274.5V282.0M557.5 274.9V282.1M558.5 275.0V282.2M559.5 275.1V282.2M560.5 275.2V282.2M561.5 275.3V282.2M562.5 275.3V282.3M563.5 275.4V282.4M564.5 275.6V282.4M565.5 275.7V283.4M566.5 275.8V283.4M567.5 275.8V283.5M568.5 275.9V283.6M569.5 276.3V283.6M570.5 276.4V283.7M571.5 276.4V282.1M572.5 274.2V282.2M573.5 274.3V282.3M574.5 274.4V282.3M575.5 274.4V282.4M576.5 276.2V282.0M577.5 276.2V282.1M578.5 275.4V283.8M579.5 275.4V283.9M580.5 275.5V284.0M581.5 277.3V284.0M582.5 277.3V284.1M583.5 277.4V284.5M584.5 277.0V284.6M585.5 277.0V284.7M586.5 277.1V283.9M587.5 277.2V284.0M588.5 277.2V284.0M589.5 277.7V284.1M590.5 277.7V283.2M591.5 277.8V283.2M592.5 277.9V283.2M593.5 277.9V283.3M594.5 278.0V283.8M595.5 276.3V283.8M596.5 276.4V283.9M597.5 276.5V284.0M598.5 276.5V284.0M599.5 276.6V284.1M600.5 276.6V284.2M601.5 278.4V284.3M602.5 278.5V285.3M603.5 278.3V285.4M604.5 278.4V285.5M605.5 276.6V285.6M606.5 276.7V285.7M607.5 276.8V285.7M608.5 276.9V285.1M609.5 278.9V285.2M610.5 278.9V286.4M611.5 279.3V286.5M612.5 279.4V286.6M613.5 279.3V286.7M614.5 279.4V286.7M615.5 279.5V286.8M616.5 279.6V287.4M617.5 279.7V287.5M618.5 279.7V287.6M619.5 280.1V287.7M620.5 280.1V287.8M621.5 277.8V286.8M622.5 277.9V286.9M623.5 278.0V287.0M624.5 278.1V287.1M625.5 280.1V287.2M626.5 280.2V285.9M627.5 280.3V285.9M628.5 280.7V286.0M629.5 280.8V286.1M630.5 280.9V286.1M631.5 280.9V286.1M632.5 281.0V286.2M633.5 281.1V286.3M634.5 279.2V287.3M635.5 279.3V287.4M636.5 279.4V287.5M637.5 279.3V287.1M638.5 279.4V287.2M639.5 281.5V287.3M640.5 281.6V287.4M641.5 281.7V287.5M642.5 281.8V289.6M643.5 281.9V289.7M644.5 281.4V289.7M645.5 281.5V289.8M646.5 281.6V287.9M647.5 280.6V288.0M648.5 280.7V288.0M649.5 280.8V288.1M650.5 280.9V289.2M651.5 281.0V289.2M652.5 281.0V289.3M653.5 283.7V289.2M654.5 283.4V289.2M655.5 283.3V289.0M656.5 283.0V287.0M657.5 282.8V286.8M658.5 282.8V286.6M659.5 282.6V286.4M660.5 282.4V287.5M661.5 280.4V287.3M662.5 275.6V287.1M663.5 272.9V286.9M664.5 268.2V282.0M665.5 263.4V277.2M666.5 259.4V271.7M667.5 253.7V267.0M668.5 253.7V263.3M669.5 254.8V265.2M670.5 254.8V265.2M671.5 254.8V265.2M672.5 254.8V265.2M673.5 254.8V265.4M674.5 254.9V265.4M675.5 254.9V265.4M676.5 255.7V265.4M677.5 255.7V265.4M678.5 255.9V266.6M679.5 255.9V266.6M680.5 255.9V265.4M681.5 255.9V264.4M682.5 254.7V264.4M683.5 254.7V264.4M684.5 254.7V264.4M685.5 254.7V264.4M686.5 255.3V264.4M687.5 255.3V264.7M688.5 254.6V264.7M689.5 254.6V264.8M690.5 254.6V264.8M691.5 254.6V264.8M692.5 256.0V264.8M693.5 256.0V264.8M694.5 256.0V264.8M695.5 255.7V264.4M696.5 255.7V264.4M697.5 255.7V264.4M698.5 255.7V267.9M699.5 255.7V267.9M700.5 254.9V267.9M701.5 253.2V267.9M702.5 253.2V267.9M703.5 253.2V267.9M704.5 253.2V265.1M705.5 255.8V265.1M706.5 255.6V265.1M707.5 255.6V265.1M708.5 255.6V265.1M709.5 255.6V265.8M710.5 255.6V265.8M711.5 255.9V264.8M712.5 255.9V264.8M713.5 255.9V266.1M714.5 255.9V266.1M715.5 255.9V266.1M716.5 255.9V264.2M717.5 255.9V264.2M718.5 255.9V264.3M719.5 255.9V264.3M720.5 254.8V264.3M721.5 254.8V265.3M722.5 254.8V265.3M723.5 254.8V265.3M724.5 255.0V265.3M725.5 255.0V265.3M726.5 255.0V265.3M727.5 255.0V264.6M728.5 255.0V264.6M729.5 254.5V264.6M730.5 254.5V264.6M731.5 254.5V264.6M732.5 253.1V265.5M733.5 253.1V265.5M734.5 254.6V265.5M735.5 254.6V265.5M736.5 253.7V265.5M737.5 253.7V264.2M738.5 253.7V264.2M739.5 255.2V264.2M740.5 255.2V264.2M741.5 255.0V266.8M742.5 255.0V266.8M743.5 255.0V266.8M744.5 254.0V264.3M745.5 254.0V264.3M746.5 254.0V264.3M747.5 254.0V264.0M748.5 254.0V264.0M749.5 254.0V264.0M750.5 255.7V264.0M751.5 255.7V264.0M752.5 255.7V264.0M753.5 255.7V266.6M754.5 255.7V266.6M755.5 255.7V264.4M756.5 255.7V264.4M757.5 255.7V264.1M758.5 255.7V264.1M759.5 255.2V264.1M760.5 255.2V264.1M761.5 255.2V266.1M762.5 255.2V266.1M763.5 252.8V266.1M764.5 252.8V266.1M765.5 252.8V266.1M766.5 255.6V264.1M767.5 255.6V264.1M768.5 254.4V264.1M769.5 254.4V264.1M770.5 254.4V264.1M771.5 254.4V264.1M772.5 253.6V264.1M773.5 253.6V264.1M774.5 255.2V264.1M775.5 255.2V264.8M776.5 255.2V264.8M777.5 253.3V264.8M778.5 253.3V267.7M779.5 253.3V267.7M780.5 253.3V267.7M781.5 255.8V267.7M782.5 255.8V267.7M783.5 255.8V267.7M784.5 254.7V265.0M785.5 254.7V265.0M786.5 254.7V265.0M787.5 253.8V265.0M788.5 253.8V267.8M789.5 253.8V267.8M790.5 255.2V267.8M791.5 255.2V264.5M792.5 255.0V264.5M793.5 255.0V264.5M794.5 255.0V264.5M795.5 255.0V267.5M796.5 255.9V267.5M797.5 255.9V264.2M798.5 255.9V264.2M799.5 255.9V264.2M800.5 254.2V264.2M801.5 254.2V264.2M802.5 254.2V264.2M803.5 254.2V264.8M804.5 254.2V264.8M805.5 255.7V264.8M806.5 255.7V264.8M807.5 253.0V264.8M808.5 253.0V267.9M809.5 254.9V267.9M810.5 254.9V267.9M811.5 254.9V266.9M812.5 254.9V266.9M813.5 255.0V266.9M814.5 255.0V266.9M815.5 255.0V264.3M816.5 255.0V264.3M817.5 255.4V264.3M818.5 255.4V264.3M819.5 255.8V265.7M820.5 255.8V265.7M821.5 255.8V265.7M822.5 255.8V265.7M823.5 255.8V264.3M824.5 255.3V264.3M825.5 255.3V265.0M826.5 255.0V265.0M827.5 255.0V265.0M828.5 255.7V264.1M829.5 253.8V264.1M830.5 253.8V265.5M831.5 253.8V265.5M832.5 252.8V265.5M833.5 252.8V265.5M834.5 252.8V265.5M835.5 253.5V265.5M836.5 253.5V264.8M837.5 253.5V264.8M838.5 253.5V264.8M839.5 255.7V265.8M840.5 255.7V265.8M841.5 255.7V265.8M842.5 254.2V265.8M843.5 254.2V265.8M844.5 254.2V265.8M845.5 254.2V264.5M846.5 254.2V264.5M847.5 255.5V264.5M848.5 255.5V264.5M849.5 255.5V264.5M850.5 254.9V264.5M851.5 254.9V264.5M852.5 253.9V264.5M853.5 253.9V264.5M854.5 253.9V267.9M855.5 254.5V267.9M856.5 254.5V267.9M857.5 256.0V267.9M858.5 256.0V267.9M859.5 256.0V265.3M858.5 262.0V284.0M859.5 262.0V284.0M860.5 284.2V287.7M861.5 284.2V287.7M862.5 284.2V287.7M863.5 284.2V287.7M864.5 284.1V287.1M865.5 284.1V287.1M866.5 284.1V287.1M867.5 284.2V287.2M868.5 284.2V287.2M869.5 284.2V287.2M870.5 284.2V287.2M871.5 284.2V288.4M872.5 284.5V288.4M873.5 284.5V288.4M874.5 284.5V287.1M875.5 284.5V287.1M876.5 284.5V287.1M877.5 284.5V287.1M878.5 284.4V287.7M879.5 284.4V287.7M880.5 284.4V287.7M881.5 284.4V287.7M882.5 284.3V287.7M883.5 284.3V287.7M884.5 284.3V287.1M885.5 284.3V287.1M886.5 284.3V287.1M887.5 284.2V287.1M888.5 284.2V287.6M889.5 284.2V287.6M890.5 284.2V287.6M891.5 284.2V287.6M892.5 284.2V287.6M893.5 284.2V287.2M894.5 284.2V287.2M895.5 284.2V288.4M896.5 284.2V288.4M897.5 284.2V288.4M898.5 284.5V288.4M899.5 284.5V287.6M900.5 284.5V287.6M901.5 284.5V287.6M902.5 284.5V287.8M903.5 284.5V287.8M904.5 283.2V287.8M905.5 283.2V287.8M906.5 283.2V287.1M907.5 283.2V287.1M908.5 283.2V287.1M909.5 284.5V287.1M910.5 284.5V287.1M911.5 284.5V287.8M912.5 284.5V287.8M913.5 284.5V287.8M914.5 284.5V287.8M915.5 284.5V287.8M916.5 284.5V287.3M917.5 284.2V287.3M918.5 284.2V287.3M919.5 284.2V287.3M920.5 284.2V287.1M921.5 284.2V287.1M922.5 284.2V287.1M923.5 283.9V287.1M924.5 283.9V287.1M925.5 283.9V287.3M926.5 284.4V287.3M927.5 284.4V287.3M928.5 284.4V287.3M929.5 284.4V287.3M930.5 284.4V288.2M931.5 284.2V288.2M932.5 284.2V288.2M933.5 284.2V288.2M934.5 284.2V288.2M935.5 284.2V288.2M936.5 284.2V287.1M937.5 284.2V287.1M938.5 284.2V287.1M939.5 284.2V287.2M940.5 284.2V287.2M941.5 284.2V287.2M942.5 284.1V287.2M943.5 284.1V287.2M944.5 284.2V287.2M945.5 284.2V288.4M946.5 284.2V288.4M947.5 284.2V288.4M948.5 284.2V287.2M949.5 284.1V287.2M950.5 284.1V287.3M951.5 284.1V287.3M952.5 284.1V288.1M953.5 284.1V288.1M954.5 284.1V288.1M955.5 283.8V288.1M956.5 283.8V287.3M957.5 283.8V287.3M958.5 283.7V287.3M959.5 283.7V287.3M915.5 276.8V279.2M916.5 276.8V279.2M919.5 276.8V279.2M920.5 276.8V279.2M924.5 276.8V279.2M925.5 276.8V279.2M928.5 276.8V279.2M930.5 276.8V279.2M932.5 276.8V279.2M933.5 276.8V279.2M937.5 276.8V279.2M938.5 276.8V279.2M940.5 276.8V279.2M941.5 276.8V279.2M945.5 276.8V279.2M946.5 276.8V279.2M948.5 276.8V279.2M949.5 276.8V279.2M950.5 276.8V279.2M957.5 276.8V279.2M958.5 276.8V279.2M959.5 276.8V279.2" stroke="#0000ff" stroke-width="1" fill="none" opacity="1"/><path d="M90.5 281.9V289.2M91.5 281.9V289.2M92.5 281.9V289.2M93.5 280.2V289.2M94.5 280.2V289.2M95.5 280.2V288.6M96.5 280.1V288.6M97.5 282.5V288.6M98.5 282.5V288.6M99.5 281.8V288.6M100.5 281.8V288.6M101.5 282.8V288.3M102.5 282.8V288.3M103.5 282.8V288.3M104.5 282.8V288.0M105.5 282.2V288.0M106.5 282.2V288.0M107.5 282.2V288.0M108.5 282.5V288.0M109.5 282.5V288.0M110.5 282.5V288.2M111.5 282.5V288.2M112.5 282.4V288.2M113.5 282.4V288.2M114.5 282.5V288.2M115.5 282.5V288.2M116.5 281.9V288.1M117.5 281.9V288.1M118.5 281.9V288.1M119.5 281.9V288.4M120.5 281.5V288.4M121.5 281.5V288.4M122.5 281.5V288.4M123.5 282.7V288.4M124.5 282.7V288.4M125.5 279.9V288.7M126.5 279.9V288.7M127.5 282.6V288.2M128.5 282.6V288.2M129.5 282.5V288.2M130.5 282.5V288.2M131.5 282.5V288.2M132.5 282.4V288.1M133.5 282.4V288.1M134.5 282.4V288.1M135.5 282.6V288.1M136.5 282.6V288.1M137.5 282.6V288.1M138.5 282.5V288.1M139.5 282.5V288.1M140.5 282.5V288.3M141.5 281.5V288.3M142.5 281.5V288.3M143.5 281.8V288.3M144.5 281.8V288.3M145.5 281.8V288.3M146.5 281.8V288.3M147.5 281.7V288.3M148.5 281.7V288.3M149.5 281.2V288.3M150.5 286.0V397.0M151.5 286.0V397.0M152.5 286.0V397.0M153.5 330.9V357.3M154.5 320.6V362.4M155.5 320.7V357.1M156.5 320.3V357.3M157.5 331.8V362.4M158.5 331.6V362.6M159.5 328.8V368.9M160.5 329.5V372.1M161.5 328.5V369.2M162.5 330.2V372.4M163.5 318.4V364.8M164.5 318.2V364.3M165.5 329.4V365.2M166.5 327.9V370.7M167.5 327.8V370.9M168.5 326.8V355.3M169.5 326.6V360.1M170.5 328.7V358.4M171.5 327.1V378.2M172.5 336.3V376.3M173.5 327.1V360.3M174.5 327.1V362.7M175.5 327.1V362.7M176.5 327.1V362.0M177.5 331.6V371.2M178.5 327.6V371.9M179.5 326.6V352.6M180.5 326.6V357.8M181.5 326.6V357.8M182.5 326.6V360.3M183.5 327.9V360.3M184.5 329.6V349.8M185.5 329.6V358.8M186.5 329.6V360.7M187.5 330.8V360.7M188.5 313.0V360.6M189.5 313.0V360.7M190.5 330.7V360.7M191.5 329.4V360.7M192.5 327.2V372.8M193.5 333.3V372.8M194.5 327.2V372.8M195.5 331.9V372.8M196.5 336.1V372.8M197.5 325.6V356.9M198.5 325.6V356.9M199.5 327.2V358.2M200.5 327.2V357.7M201.5 326.1V364.2M202.5 326.5V364.2M203.5 326.5V370.7M204.5 326.7V370.7M205.5 327.5V370.7M206.5 324.4V370.7M207.5 323.4V368.3M208.5 329.0V357.6M209.5 323.4V362.6M210.5 323.4V367.2M211.5 323.5V367.2M212.5 323.5V367.2M213.5 325.8V365.1M214.5 325.8V359.6M215.5 323.5V358.4M216.5 315.6V358.3M217.5 315.6V359.6M218.5 326.7V362.6M219.5 332.0V362.6M220.5 326.7V357.6M221.5 337.0V357.8M222.5 337.0V358.2M223.5 336.8V358.4M224.5 326.1V357.4M225.5 326.1V359.0M226.5 325.6V370.1M227.5 329.7V367.9M228.5 329.4V368.2M229.5 317.7V370.9M230.5 315.8V359.9M231.5 315.6V361.3M232.5 315.3V370.0M233.5 325.4V371.4M234.5 327.7V366.1M235.5 322.6V366.4M236.5 322.8V363.0M237.5 322.1V363.4M238.5 321.9V359.7M239.5 320.6V363.9M240.5 325.0V369.5M241.5 333.7V369.9M242.5 324.6V368.9M243.5 334.8V370.4M244.5 324.1V370.7M245.5 322.7V371.0M246.5 322.7V376.8M247.5 323.6V376.8M248.5 323.5V380.3M249.5 323.5V363.0M250.5 321.4V362.9M251.5 321.4V362.9M252.5 321.3V365.7M253.5 321.3V365.9M254.5 321.3V357.6M255.5 322.1V374.2M256.5 322.1V374.3M257.5 327.6V371.6M258.5 322.0V371.6M259.5 316.3V374.3M260.5 326.8V372.5M261.5 316.2V366.5M262.5 317.9V366.5M263.5 317.8V367.3M264.5 317.2V367.3M265.5 320.6V367.6M266.5 317.2V362.5M267.5 313.4V364.9M268.5 315.2V364.9M269.5 304.7V363.6M270.5 304.6V366.9M271.5 328.5V370.1M272.5 318.0V370.1M273.5 326.5V373.0M274.5 326.4V373.0M275.5 317.9V370.1M276.5 322.1V370.1M277.5 318.0V368.3M278.5 316.9V363.7M279.5 316.8V365.5M280.5 317.5V365.6M281.5 317.5V362.3M282.5 322.3V365.6M283.5 322.0V372.7M284.5 322.3V372.7M285.5 303.2V354.7M286.5 303.1V365.0M287.5 324.2V365.1M288.5 320.1V365.0M289.5 320.1V361.5M290.5 321.8V365.1M291.5 327.2V367.6M292.5 321.8V367.6M293.5 322.1V365.7M294.5 313.2V367.7M295.5 309.6V365.9M296.5 313.3V365.9M297.5 321.9V377.2M298.5 318.8V378.3M299.5 317.1V368.2M300.5 317.1V378.4M301.5 317.1V374.7M302.5 311.4V378.4M303.5 273.3V298.8M304.5 273.3V301.4M305.5 275.9V306.3M306.5 281.5V309.6M307.5 284.1V312.9M308.5 290.5V314.2M309.5 293.9V317.2M310.5 297.2V320.2M311.5 300.2V323.2M312.5 304.6V330.6M313.5 307.6V333.3M314.5 310.6V336.1M315.5 313.4V336.8M316.5 321.0V339.5M317.5 323.7V342.9M318.5 326.5V346.3M319.5 323.4V349.6M320.5 326.8V353.0M321.5 330.2V356.8M322.5 327.2V360.8M323.5 330.6V364.8M324.5 334.6V372.1M325.5 338.6V376.1M326.5 357.3V375.3M327.5 361.3V379.3M328.5 365.3V385.4M329.5 367.2V388.4M330.5 371.2V393.9M329.5 370.0V397.0M330.5 370.0V397.0M331.5 370.0V397.0M332.5 370.0V397.0M333.5 327.0V397.0M334.5 327.0V397.0M335.5 313.8V358.1M336.5 313.8V359.7M337.5 313.8V359.7M338.5 313.7V358.5M339.5 329.8V360.1M340.5 325.6V360.1M341.5 325.6V360.1M342.5 311.4V359.7M343.5 311.4V358.8M344.5 325.8V359.7M345.5 325.7V359.7M346.5 325.7V364.1M347.5 326.8V364.1M348.5 325.1V360.3M349.5 325.3V364.6M350.5 330.5V363.6M351.5 325.1V363.6M352.5 325.1V360.3M353.5 320.1V360.3M354.5 321.0V360.3M355.5 322.4V357.6M356.5 322.7V354.8M357.5 321.6V360.4M358.5 321.6V363.2M359.5 318.0V357.7M360.5 313.9V357.7M361.5 313.9V369.8M362.5 331.0V371.5M363.5 331.0V371.7M364.5 319.6V370.9M365.5 319.6V357.3M366.5 320.5V357.2M367.5 324.2V357.2M368.5 324.2V369.9M369.5 319.6V372.7M370.5 322.1V372.7M371.5 322.1V371.4M372.5 323.2V357.5M373.5 326.4V354.7M374.5 325.3V361.6M375.5 329.3V360.0M376.5 329.6V360.0M377.5 329.6V357.9M378.5 314.2V357.9M379.5 314.2V357.9M380.5 315.3V357.9M381.5 329.3V355.9M382.5 326.7V361.1M383.5 329.3V361.1M384.5 326.7V360.5M385.5 321.2V360.5M386.5 322.8V362.3M387.5 321.0V361.0M388.5 329.4V361.0M389.5 329.4V364.6M390.5 319.1V364.6M391.5 319.1V364.6M392.5 329.3V364.6M393.5 329.7V355.9M394.5 319.3V367.2M395.5 319.3V367.2M396.5 319.3V367.2M397.5 319.3V367.2M398.5 319.4V352.4M399.5 319.4V357.3M400.5 324.1V356.3M401.5 323.0V377.3M402.5 323.0V377.3M403.5 315.4V365.4M404.5 315.4V362.2M405.5 317.4V362.2M406.5 323.9V369.0M407.5 322.3V368.6M408.5 329.5V369.0M409.5 329.5V366.0M410.5 329.5V365.1M411.5 328.3V365.1M412.5 325.9V360.5M413.5 325.7V359.8M414.5 325.7V359.0M415.5 325.7V359.8M416.5 325.7V359.7M417.5 324.8V359.7M418.5 324.8V360.5M419.5 330.8V360.5M420.5 312.9V360.3M421.5 312.9V360.5M422.5 329.0V360.5M423.5 330.3V358.4M424.5 329.8V357.2M425.5 330.3V359.3M426.5 326.5V358.2M427.5 326.9V359.3M428.5 326.9V370.1M429.5 329.7V369.8M430.5 331.4V370.1M431.5 327.7V370.1M432.5 327.7V357.3M433.5 330.1V350.3M434.5 326.1V355.8M435.5 323.6V362.8M436.5 324.6V361.7M437.5 324.6V361.7M438.5 325.3V363.9M439.5 324.8V363.9M440.5 319.0V357.1M441.5 314.2V357.2M442.5 321.2V356.7M443.5 321.2V357.2M444.5 328.6V379.8M445.5 329.0V379.8M446.5 328.6V375.2M447.5 314.7V379.8M448.5 314.7V357.8M449.5 324.6V357.9M450.5 326.6V351.9M451.5 324.6V357.9M452.5 324.6V357.9M453.5 328.5V357.9M454.5 329.1V357.1M455.5 328.5V356.2M456.5 331.6V357.1M457.5 328.5V357.1M458.5 329.8V379.2M459.5 336.8V379.2M460.5 329.8V379.2M461.5 329.8V371.9M462.5 318.4V371.6M463.5 319.3V372.8M464.5 325.0V356.3M465.5 330.9V363.1M466.5 324.2V371.8M467.5 323.9V371.8M468.5 328.0V372.5M469.5 327.1V362.2M470.5 327.7V358.4M471.5 327.7V358.2M472.5 328.4V358.4M473.5 327.1V358.4M474.5 327.0V358.3M475.5 327.1V358.4M476.5 327.1V361.5M477.5 330.0V361.3M478.5 327.8V373.3M479.5 329.0V373.7M480.5 327.8V373.7M481.5 331.6V357.2M482.5 327.8V357.2M483.5 327.8V354.3M484.5 327.5V357.2M485.5 329.3V356.9M486.5 327.5V358.4M487.5 330.8V357.1M488.5 330.8V357.1M489.5 328.9V354.4M490.5 323.6V357.1M491.5 309.8V356.1M492.5 310.0V357.1M493.5 320.3V359.8M494.5 320.1V359.8M495.5 316.4V377.1M496.5 316.4V377.1M497.5 320.1V365.4M498.5 319.2V365.7M499.5 319.8V365.7M500.5 320.3V356.5M501.5 320.5V356.7M502.5 322.9V361.5M503.5 320.9V374.7M504.5 320.1V375.2M505.5 320.5V374.7M506.5 320.1V375.0M507.5 327.3V358.4M508.5 334.0V359.1M509.5 327.3V364.0M510.5 334.0V363.9M511.5 329.9V364.0M512.5 329.9V364.0M513.5 319.7V363.7M514.5 319.2V364.0M515.5 325.0V364.7M516.5 325.5V364.5M517.5 325.5V364.5M518.5 325.0V357.3M519.5 325.7V353.6M520.5 329.6V361.0M521.5 325.2V369.0M522.5 325.6V372.2M523.5 313.5V372.5M524.5 310.3V367.0M525.5 309.5V364.2M526.5 308.7V366.2M527.5 311.8V363.7M528.5 317.8V360.4M529.5 316.5V371.5M530.5 316.3V370.3M531.5 316.5V364.4M532.5 316.7V375.3M533.5 311.8V374.4M534.5 311.5V376.0M535.5 306.2V376.3M536.5 306.4V376.7M537.5 306.7V371.3M538.5 306.9V375.7M539.5 316.7V361.6M540.5 316.9V361.9M541.5 325.4V361.7M542.5 317.4V367.3M543.5 325.9V367.1M544.5 322.2V366.9M545.5 322.5V361.8M546.5 322.7V367.2M547.5 323.6V367.0M548.5 324.4V366.8M549.5 314.4V366.6M550.5 315.1V374.6M551.5 314.4V376.5M552.5 315.5V378.3M553.5 314.4V378.1M554.5 319.3V364.1M555.5 318.3V362.4M556.5 318.2V362.8M557.5 318.3V363.5M558.5 320.7V363.3M559.5 312.3V360.7M560.5 313.0V364.2M561.5 312.3V364.3M562.5 312.3V364.4M563.5 320.9V364.8M564.5 328.5V363.3M565.5 320.9V371.0M566.5 318.7V371.1M567.5 318.7V371.2M568.5 320.1V370.9M569.5 318.7V371.0M570.5 328.8V371.1M571.5 323.9V372.0M572.5 321.8V376.1M573.5 321.8V376.2M574.5 322.1V376.3M575.5 322.1V369.1M576.5 319.5V370.5M577.5 315.4V369.8M578.5 318.5V370.7M579.5 312.8V364.5M580.5 309.6V364.6M581.5 310.5V384.4M582.5 319.5V384.5M583.5 323.5V364.9M584.5 321.2V361.8M585.5 322.4V361.9M586.5 312.3V371.4M587.5 310.3V371.5M588.5 309.9V371.9M589.5 309.5V372.0M590.5 321.6V373.8M591.5 317.7V368.9M592.5 317.0V367.4M593.5 319.2V363.8M594.5 319.5V365.5M595.5 319.1V364.0M596.5 315.4V365.7M597.5 305.0V369.2M598.5 298.1V375.0M599.5 304.2V373.6M600.5 314.4V375.2M601.5 314.7V365.4M602.5 315.0V365.3M603.5 316.6V365.6M604.5 315.6V364.8M605.5 316.1V377.9M606.5 317.7V379.2M607.5 323.1V377.9M608.5 317.6V374.6M609.5 318.1V367.3M610.5 318.6V366.4M611.5 318.7V367.4M612.5 312.4V372.7M613.5 311.0V372.7M614.5 313.0V372.6M615.5 312.3V366.8M616.5 313.3V367.0M617.5 305.8V367.0M618.5 304.7V371.0M619.5 321.4V372.6M620.5 321.7V372.7M621.5 321.7V372.7M622.5 321.6V371.2M623.5 322.9V388.6M624.5 323.1V388.7M625.5 323.1V388.0M626.5 319.4V367.0M627.5 319.3V367.7M628.5 320.8V367.3M629.5 312.7V367.4M630.5 310.8V367.7M631.5 316.3V367.1M632.5 314.8V367.8M633.5 314.7V367.9M634.5 315.8V369.1M635.5 315.8V368.8M636.5 321.9V376.0M637.5 315.7V376.1M638.5 318.4V377.8M639.5 318.3V369.0M640.5 308.4V369.0M641.5 304.4V382.2M642.5 317.8V382.3M643.5 317.7V372.3M644.5 311.9V372.3M645.5 312.3V384.7M646.5 322.2V385.1M647.5 303.8V369.2M648.5 304.1V366.6M649.5 312.4V381.0M650.5 319.1V373.6M651.5 318.7V383.7M652.5 322.2V383.3M653.5 281.9V289.1M654.5 281.9V289.1M655.5 281.8V289.1M656.5 281.8V288.0M657.5 281.8V288.0M658.5 281.8V288.0M659.5 281.8V288.0M660.5 281.8V288.0M661.5 281.8V288.8M662.5 281.8V288.8M663.5 281.9V288.8M664.5 281.9V288.2M665.5 281.9V288.2M666.5 281.9V288.2M653.5 284.0V370.0M654.5 284.0V370.0M666.5 284.0V381.0M667.5 284.0V381.0M668.5 337.5V381.9M669.5 337.5V376.7M670.5 337.5V372.1M671.5 337.5V366.9M672.5 337.4V361.7M673.5 338.2V352.5M674.5 338.2V352.5M675.5 338.2V352.5M676.5 338.2V355.7M677.5 337.5V355.7M678.5 337.5V352.3M679.5 337.5V352.3M680.5 335.4V352.3M681.5 335.4V352.3M682.5 338.0V352.3M683.5 338.0V354.5M684.5 338.0V354.5M685.5 338.0V353.4M686.5 338.0V353.4M687.5 338.0V353.4M688.5 337.3V353.4M689.5 337.3V353.4M690.5 337.3V352.3M691.5 337.3V352.3M692.5 337.7V352.3M693.5 337.7V352.3M694.5 337.7V352.3M695.5 337.7V353.8M696.5 336.3V353.8M697.5 336.3V353.8M698.5 336.0V353.8M699.5 336.0V353.8M700.5 336.0V353.8M701.5 336.0V352.2M702.5 336.0V352.2M703.5 336.0V353.7M704.5 338.0V353.7M705.5 338.0V353.7M706.5 338.0V354.8M707.5 338.0V354.8M708.5 338.0V354.8M709.5 338.3V354.8M710.5 338.3V354.8M711.5 338.3V354.8M712.5 338.3V353.8M713.5 338.3V353.8M714.5 338.2V353.8M715.5 338.2V353.8M716.5 338.2V354.8M717.5 338.2V354.8M718.5 336.8V354.8M719.5 336.8V354.8M720.5 336.8V355.5M721.5 336.8V355.5M722.5 336.8V355.5M723.5 333.7V353.6M724.5 333.7V353.6M725.5 333.7V353.6M726.5 333.7V353.6M727.5 333.7V353.6M728.5 337.0V353.6M729.5 337.0V352.9M730.5 337.0V352.9M731.5 337.0V352.9M732.5 337.0V352.9M733.5 332.2V352.1M734.5 332.2V352.1M735.5 337.4V352.4M736.5 337.4V352.4M737.5 337.4V358.1M738.5 337.4V358.1M739.5 336.4V359.0M740.5 336.4V359.0M741.5 336.4V352.5M742.5 336.4V352.5M743.5 338.3V352.5M744.5 338.3V352.5M745.5 338.3V353.1M746.5 337.8V353.1M747.5 337.8V353.1M748.5 336.0V353.1M749.5 336.0V353.1M750.5 336.0V353.1M751.5 336.0V356.3M752.5 338.1V356.3M753.5 338.1V356.3M754.5 338.1V356.3M755.5 338.1V356.3M756.5 338.1V352.1M757.5 337.8V352.1M758.5 337.8V352.1M759.5 337.8V353.4M760.5 337.8V353.4M761.5 337.8V352.2M762.5 337.8V352.2M763.5 338.5V355.1M764.5 338.5V355.1M765.5 338.5V355.1M766.5 335.6V355.1M767.5 335.6V355.1M768.5 335.6V355.1M769.5 336.3V352.2M770.5 336.3V352.2M771.5 336.3V352.2M772.5 335.6V352.2M773.5 335.6V352.2M774.5 335.6V352.2M775.5 335.6V356.0M776.5 338.2V356.0M777.5 338.2V356.0M778.5 338.2V356.0M779.5 338.2V356.0M780.5 338.2V354.2M781.5 338.2V354.2M782.5 336.8V354.2M783.5 336.8V354.2M784.5 336.8V354.2M785.5 336.8V353.0M786.5 336.8V353.0M787.5 338.3V353.0M788.5 338.3V355.6M789.5 338.3V355.6M790.5 338.3V355.6M791.5 337.9V355.6M792.5 337.9V355.6M793.5 337.9V355.6M794.5 336.4V353.0M795.5 336.4V353.0M796.5 336.4V353.0M797.5 336.4V353.0M798.5 336.4V353.0M799.5 334.9V353.0M800.5 334.9V352.8M801.5 334.9V352.8M802.5 334.9V352.8M803.5 334.9V352.1M804.5 336.7V352.1M805.5 336.7V355.3M806.5 336.7V355.3M807.5 336.7V355.3M808.5 336.7V355.3M809.5 335.5V355.3M810.5 335.5V355.3M811.5 335.5V352.4M812.5 335.5V352.4M813.5 337.8V359.7M814.5 337.8V359.7M815.5 337.8V359.7M816.5 335.7V359.7M817.5 335.7V353.1M818.5 335.7V353.1M819.5 335.7V353.1M820.5 332.2V353.1M821.5 332.2V353.1M822.5 332.2V352.5M823.5 332.2V352.5M824.5 337.5V357.5M825.5 337.5V357.5M826.5 337.5V357.5M827.5 337.1V357.5M828.5 337.1V352.8M829.5 337.1V352.8M830.5 338.2V352.8M831.5 338.2V352.8M832.5 338.2V352.8M833.5 337.6V352.2M834.5 337.6V352.2M835.5 337.6V352.2M836.5 337.6V352.2M837.5 337.6V355.4M838.5 337.6V355.4M839.5 332.2V355.4M840.5 332.2V355.4M841.5 332.2V355.4M842.5 332.2V355.4M843.5 332.2V355.8M844.5 332.2V355.8M845.5 337.3V356.2M846.5 337.3V356.2M847.5 337.3V354.1M848.5 337.3V354.9M849.5 337.3V354.9M850.5 337.3V354.9M851.5 337.8V354.9M852.5 337.8V354.9M853.5 337.8V354.9M854.5 336.5V357.5M855.5 336.5V357.5M856.5 337.9V357.5M857.5 337.9V357.5M858.5 337.9V357.5M857.5 328.6V343.9M858.5 317.6V343.9M859.5 303.6V333.9M860.5 289.6V322.9M861.5 287.6V308.9M862.5 287.6V294.9M863.5 283.7V289.8M864.5 283.7V289.8M865.5 283.7V289.8M866.5 283.7V289.4M867.5 282.4V289.4M868.5 282.4V289.4M869.5 282.4V289.4M870.5 282.4V289.4M871.5 282.4V289.4M872.5 282.4V289.4M873.5 283.9V289.4M874.5 283.9V289.4M875.5 283.9V289.4M876.5 283.9V289.4M877.5 283.9V289.8M878.5 283.9V289.8M879.5 283.9V289.8M880.5 283.6V289.8M881.5 283.6V289.8M882.5 283.6V289.8M883.5 283.4V289.5M884.5 283.4V289.5M885.5 283.4V289.5M886.5 283.4V289.5M887.5 283.4V289.5M888.5 283.4V289.5M889.5 283.7V289.0M890.5 283.7V289.0M891.5 283.7V289.0M892.5 283.9V289.7M893.5 283.9V289.7M894.5 283.9V289.7M895.5 283.9V289.2M896.5 283.9V289.2M897.5 283.1V289.2M898.5 283.1V289.2M899.5 283.1V289.2M900.5 283.2V289.2M901.5 283.2V289.3M902.5 283.2V289.3M903.5 283.2V289.3M904.5 283.2V289.3M905.5 283.2V289.4M906.5 283.9V289.4M907.5 283.9V289.4M908.5 283.9V289.4M909.5 283.9V289.4M910.5 283.3V291.8M911.5 283.3V291.8M912.5 283.3V291.8M913.5 283.3V291.8M914.5 283.3V291.8M915.5 283.3V290.1M916.5 283.9V290.1M917.5 283.9V290.1M918.5 283.9V289.6M919.5 284.0V289.6M920.5 284.0V289.6M921.5 284.0V289.6M922.5 283.6V289.6M923.5 283.6V289.6M924.5 283.6V289.6M925.5 283.9V289.6M926.5 283.9V290.0M927.5 283.9V290.0M928.5 283.9V289.2M929.5 283.2V289.2M930.5 283.2V289.2M931.5 283.8V289.2M932.5 283.8V289.2M933.5 283.8V289.2M934.5 283.8V289.3M935.5 283.8V289.3M936.5 283.8V289.4M937.5 283.8V289.4M938.5 283.8V289.4M939.5 283.8V289.4M940.5 283.7V289.9M941.5 283.7V289.9M942.5 283.7V289.1M943.5 283.7V289.1M944.5 283.7V289.1M945.5 283.4V289.1M946.5 283.4V289.1M947.5 283.4V289.1M948.5 283.4V289.1M949.5 283.4V289.1M950.5 283.8V289.1M951.5 283.8V289.1M952.5 283.8V289.4M953.5 283.8V289.4M954.5 283.8V289.4M955.5 283.8V289.4M956.5 282.2V289.4M957.5 282.2V289.6M958.5 282.2V289.6M959.5 282.2V289.6" stroke="#ff0000" stroke-width="1" fill="none" opacity="1"/><path d="M83 177.5H963" stroke="#1a1a1a" stroke-width="1.4"/><path d="M84 177V411" stroke="#8a8a8a" stroke-width="2.4"/><path d="M962 177V411" stroke="#8a8a8a" stroke-width="2.2"/><path d="M83 410.5H963" stroke="#1a1a1a" stroke-width="1.6"/><path d="M83.5 411V416M92.5 411V414M101.5 411V414M110.5 411V414M118.5 411V414M127.5 411V416M136.5 411V414M145.5 411V414M154.5 411V414M162.5 411V414M171.5 411V416M180.5 411V414M189.5 411V414M198.5 411V414M206.5 411V414M215.5 411V416M224.5 411V414M233.5 411V414M242.5 411V414M250.5 411V414M259.5 411V416M268.5 411V414M277.5 411V414M286.5 411V414M294.5 411V414M303.5 411V416M312.5 411V414M321.5 411V414M330.5 411V414M338.5 411V414M347.5 411V416M356.5 411V414M365.5 411V414M374.5 411V414M382.5 411V414M391.5 411V416M400.5 411V414M409.5 411V414M417.5 411V414M426.5 411V414M435.5 411V416M444.5 411V414M453.5 411V414M461.5 411V414M470.5 411V414M479.5 411V416M488.5 411V414M497.5 411V414M505.5 411V414M514.5 411V414M523.5 411V416M532.5 411V414M541.5 411V414M549.5 411V414M558.5 411V414M567.5 411V416M576.5 411V414M585.5 411V414M593.5 411V414M602.5 411V414M611.5 411V416M620.5 411V414M629.5 411V414M637.5 411V414M646.5 411V414M655.5 411V416M664.5 411V414M672.5 411V414M681.5 411V414M690.5 411V414M699.5 411V416M708.5 411V414M716.5 411V414M725.5 411V414M734.5 411V414M743.5 411V416M752.5 411V414M760.5 411V414M769.5 411V414M778.5 411V414M787.5 411V416M796.5 411V414M804.5 411V414M813.5 411V414M822.5 411V414M831.5 411V416M840.5 411V414M848.5 411V414M857.5 411V414M866.5 411V414M875.5 411V416M884.5 411V414M892.5 411V414M901.5 411V414M910.5 411V414M919.5 411V416M928.5 411V414M936.5 411V414M945.5 411V414M954.5 411V414M963.5 411V416M78 202.5H83M78 285.5H83M78 367.5H83M80 185.5H83M80 218.5H83M80 235.5H83M80 252.5H83M80 268.5H83M80 301.5H83M80 318.5H83M80 334.5H83M80 351.5H83M80 384.5H83M80 400.5H83" stroke="#2a2a2a" stroke-width="1.3" fill="none"/><path d="M136.5 528V760M180.5 528V760M223.5 528V760M267.5 528V760M310.5 528V760M353.5 528V760M397.5 528V760M440.5 528V760M484.5 528V760M527.5 528V760M571.5 528V760M614.5 528V760M657.5 528V760M701.5 528V760M744.5 528V760M788.5 528V760M831.5 528V760M874.5 528V760M918.5 528V760M95 538.5H961M95 630.5H961M95 721.5H961" stroke="#efefef" stroke-width="2" fill="none"/><path d="M95.5 640.0V673.4M96.5 640.0V673.4M97.5 640.0V673.4M98.5 640.0V673.4M99.5 640.0V673.4M100.5 648.3V657.3M101.5 648.3V657.3M102.5 648.3V657.3M103.5 648.3V657.3M104.5 648.2V657.3M105.5 648.2V661.2M106.5 648.3V661.2M107.5 648.2V659.6M108.5 648.2V659.6M109.5 646.7V660.0M110.5 646.7V660.0M111.5 646.6V659.6M112.5 647.3V659.6M113.5 647.2V657.1M114.5 647.8V657.1M115.5 647.8V657.1M116.5 643.4V660.9M117.5 643.4V660.9M118.5 643.4V660.9M119.5 645.2V660.9M120.5 645.2V659.5M121.5 648.2V659.5M122.5 648.4V657.6M123.5 648.4V657.6M124.5 648.4V657.6M125.5 648.4V657.6M126.5 644.2V660.5M127.5 644.2V660.5M128.5 644.2V660.5M129.5 644.2V657.8M130.5 644.1V657.3M131.5 644.1V657.3M132.5 647.4V657.3M133.5 647.4V657.3M134.5 647.4V659.5M135.5 647.3V659.5M136.5 643.6V659.5M137.5 643.6V659.5M138.5 647.4V659.5M139.5 647.4V657.4M140.5 647.4V657.4M141.5 647.3V657.4M142.5 648.2V657.8M143.5 648.2V660.8M144.5 648.1V660.8M145.5 647.5V657.8M146.5 647.5V657.0M147.5 647.5V657.0M148.5 647.5V657.0M149.5 647.7V657.0M150.5 647.6V660.3M151.5 576.6V620.2M152.5 578.6V620.2M153.5 571.0V614.8M154.5 578.8V620.2M155.5 573.8V613.6M156.5 591.5V606.4M157.5 581.6V613.6M158.5 581.5V613.1M159.5 581.4V613.7M160.5 577.5V612.6M161.5 577.4V618.9M162.5 579.9V620.7M163.5 584.4V611.6M164.5 583.6V610.9M165.5 584.6V613.4M166.5 583.5V611.0M167.5 579.8V613.4M168.5 579.7V615.7M169.5 574.3V619.3M170.5 576.2V619.3M171.5 579.4V619.3M172.5 586.3V618.1M173.5 573.9V611.0M174.5 573.8V616.1M175.5 574.0V612.5M176.5 584.0V612.6M177.5 583.6V618.1M178.5 575.0V616.3M179.5 572.9V618.2M180.5 573.7V613.2M181.5 572.7V618.2M182.5 583.3V618.2M183.5 583.3V610.9M184.5 583.1V613.0M185.5 583.0V613.0M186.5 582.8V613.0M187.5 582.7V613.1M188.5 584.4V614.6M189.5 584.3V614.6M190.5 582.4V620.4M191.5 582.3V612.9M192.5 572.5V613.0M193.5 572.4V618.0M194.5 572.3V618.1M195.5 572.2V616.7M196.5 572.1V618.1M197.5 572.3V614.0M198.5 572.2V615.5M199.5 571.2V610.8M200.5 571.1V619.3M201.5 583.7V619.4M202.5 580.8V618.8M203.5 580.5V611.7M204.5 582.1V614.8M205.5 582.7V611.3M206.5 579.6V609.4M207.5 566.3V615.4M208.5 566.1V615.5M209.5 567.0V614.8M210.5 579.9V622.3M211.5 578.9V622.3M212.5 578.1V622.4M213.5 561.2V613.1M214.5 563.9V616.6M215.5 563.7V615.4M216.5 578.8V619.4M217.5 578.6V613.8M218.5 578.9V619.6M219.5 578.2V617.5M220.5 579.9V623.2M221.5 577.8V621.6M222.5 566.5V614.4M223.5 569.0V610.6M224.5 566.1V616.0M225.5 568.6V608.5M226.5 578.4V622.5M227.5 578.2V621.3M228.5 577.6V608.6M229.5 577.4V622.7M230.5 577.3V616.6M231.5 575.2V615.3M232.5 575.3V614.9M233.5 579.1V614.8M234.5 579.2V619.2M235.5 575.5V620.5M236.5 578.7V621.3M237.5 565.8V620.6M238.5 565.9V604.7M239.5 572.6V616.5M240.5 575.6V616.6M241.5 574.5V622.7M242.5 576.6V617.6M243.5 569.7V617.7M244.5 569.7V618.7M245.5 573.8V623.2M246.5 574.2V623.2M247.5 566.6V616.5M248.5 568.6V617.5M249.5 567.7V617.6M250.5 566.7V604.7M251.5 577.8V604.7M252.5 579.1V609.8M253.5 576.9V623.9M254.5 565.8V620.4M255.5 559.6V615.3M256.5 565.9V618.7M257.5 579.1V618.8M258.5 574.6V618.8M259.5 574.7V618.8M260.5 574.7V618.1M261.5 574.8V607.1M262.5 577.0V614.6M263.5 577.1V614.6M264.5 577.3V620.7M265.5 578.0V620.7M266.5 578.4V609.1M267.5 579.1V618.9M268.5 579.8V619.0M269.5 580.5V619.2M270.5 581.2V617.9M271.5 582.5V617.5M272.5 583.2V618.8M273.5 584.2V618.9M274.5 585.8V618.9M275.5 568.2V621.4M276.5 568.9V621.4M277.5 573.8V621.4M278.5 588.2V619.2M279.5 588.6V619.0M280.5 592.3V619.0M281.5 593.2V619.2M282.5 590.4V619.2M283.5 593.2V619.2M284.5 594.1V619.2M285.5 594.1V619.2M286.5 589.4V626.6M287.5 591.2V626.6M288.5 598.8V626.6M289.5 596.0V626.6M290.5 598.4V618.0M291.5 599.3V618.2M292.5 582.8V617.4M293.5 583.6V618.6M294.5 586.8V617.9M295.5 601.5V614.9M296.5 602.4V618.2M297.5 606.2V617.1M298.5 607.0V622.4M299.5 597.7V623.9M300.5 599.9V617.6M301.5 601.4V617.8M302.5 602.4V620.4M303.5 603.4V623.6M304.5 614.0V625.7M305.5 611.4V622.5M151.5 570.0V617.0M152.5 570.0V617.0M305.5 617.0V623.0M306.5 617.0V623.0M307.5 617.0V623.0M315.5 617.0V623.0M316.5 617.0V623.0M317.5 617.0V623.0M320.5 617.0V623.0M321.5 617.0V623.0M322.5 617.0V623.0M365.5 611.9V618.5M366.5 604.3V620.3M367.5 610.8V620.3M368.5 603.3V614.2M369.5 607.7V620.3M370.5 607.2V620.3M371.5 606.7V618.1M372.5 606.6V618.1M373.5 606.1V615.7M374.5 606.6V615.6M375.5 603.9V626.6M376.5 603.3V626.5M377.5 602.8V620.6M378.5 602.3V607.1M379.5 601.7V607.1M380.5 601.7V620.5M381.5 588.3V607.5M382.5 586.6V620.8M383.5 586.4V620.7M384.5 586.2V620.7M385.5 598.0V620.3M386.5 598.2V624.8M387.5 599.5V624.8M388.5 599.0V617.7M389.5 600.8V618.9M390.5 605.6V618.3M391.5 599.1V618.4M392.5 587.7V618.3M393.5 587.7V626.9M394.5 587.3V627.3M395.5 594.0V627.3M396.5 596.5V618.3M397.5 589.3V618.3M398.5 591.6V617.3M399.5 582.1V622.5M400.5 584.4V621.4M401.5 581.6V610.6M402.5 581.7V622.4M403.5 594.9V622.4M404.5 598.0V623.5M405.5 596.8V619.4M406.5 594.2V622.3M407.5 594.0V622.3M408.5 578.5V616.4M409.5 575.1V624.5M410.5 578.5V625.3M411.5 578.3V624.4M412.5 597.3V625.3M413.5 593.7V611.0M414.5 592.2V610.9M415.5 593.0V617.9M416.5 568.8V621.5M417.5 568.6V621.5M418.5 568.0V623.8M419.5 567.8V619.0M420.5 590.2V624.2M421.5 590.9V621.1M422.5 591.8V622.9M423.5 591.7V622.9M424.5 591.0V618.1M425.5 590.6V619.3M426.5 568.7V619.3M427.5 568.5V619.3M428.5 568.6V619.2M429.5 586.2V617.3M430.5 586.0V615.5M431.5 585.8V620.6M432.5 592.0V621.0M433.5 591.8V624.2M434.5 589.4V624.6M435.5 589.2V612.5M436.5 589.8V617.5M437.5 588.0V612.5M438.5 587.8V612.3M439.5 590.9V611.6M440.5 587.4V617.5M441.5 588.9V617.5M442.5 595.4V604.5M443.5 589.0V617.5M444.5 588.0V617.5M445.5 587.8V617.5M446.5 566.1V624.3M447.5 566.7V624.3M448.5 565.7V624.3M449.5 584.0V623.6M450.5 585.9V614.8M451.5 583.6V614.8M452.5 583.1V617.7M453.5 585.5V616.6M454.5 589.4V618.7M455.5 584.2V618.6M456.5 582.3V619.5M457.5 585.9V625.3M458.5 585.7V617.5M459.5 584.2V618.5M460.5 584.0V622.1M461.5 583.8V612.7M462.5 586.1V612.7M463.5 584.4V614.1M464.5 587.7V614.0M465.5 580.5V614.0M466.5 580.3V625.7M467.5 581.2V624.4M468.5 581.9V621.7M469.5 584.4V620.7M470.5 581.5V616.7M471.5 584.0V620.6M472.5 581.2V612.9M473.5 581.3V618.3M474.5 581.1V618.3M475.5 580.9V618.3M476.5 556.0V618.2M477.5 558.5V618.2M478.5 558.3V616.5M479.5 580.9V622.7M480.5 580.7V622.7M481.5 578.6V622.6M482.5 578.7V612.0M483.5 555.7V622.6M484.5 556.6V619.8M485.5 581.1V619.8M486.5 579.5V619.7M487.5 579.9V616.0M488.5 581.7V615.9M489.5 581.5V615.9M490.5 581.3V614.8M491.5 582.0V612.2M492.5 578.5V611.9M493.5 581.8V613.9M494.5 575.0V613.8M495.5 565.6V614.8M496.5 565.5V621.9M497.5 571.7V619.8M498.5 571.7V621.9M499.5 573.5V621.9M500.5 573.4V618.3M501.5 574.0V618.3M502.5 563.1V618.6M503.5 566.1V604.6M504.5 562.9V622.3M505.5 563.4V619.6M506.5 576.0V622.3M507.5 578.5V614.5M508.5 575.7V615.1M509.5 575.6V615.1M510.5 554.4V614.0M511.5 552.6V614.3M512.5 552.5V615.1M513.5 552.4V615.1M514.5 567.4V616.6M515.5 565.6V615.3M516.5 575.1V623.5M517.5 575.0V623.5M518.5 574.8V620.8M519.5 574.7V620.8M520.5 575.4V620.8M521.5 556.9V620.0M522.5 556.7V620.6M523.5 572.0V622.9M524.5 573.0V616.4M525.5 572.9V622.9M526.5 574.3V619.6M527.5 574.2V622.9M528.5 551.3V612.7M529.5 552.0V614.2M530.5 572.4V616.0M531.5 576.6V613.8M532.5 573.1V622.7M533.5 573.0V622.7M534.5 553.6V619.6M535.5 556.8V615.1M536.5 556.7V614.0M537.5 572.3V615.1M538.5 575.8V618.4M539.5 575.6V618.6M540.5 572.9V619.8M541.5 572.7V619.8M542.5 572.6V619.8M543.5 571.7V617.1M544.5 571.9V619.3M545.5 547.2V621.5M546.5 547.2V615.8M547.5 547.9V615.8M548.5 565.5V617.0M549.5 566.9V617.1M550.5 572.2V611.2M551.5 575.4V618.0M552.5 572.9V619.8M553.5 559.0V619.9M554.5 559.0V616.3M555.5 571.3V616.1M556.5 571.6V616.2M557.5 571.6V614.0M558.5 571.1V623.2M559.5 569.8V617.8M560.5 571.5V620.1M561.5 575.2V621.3M562.5 563.6V621.3M563.5 563.2V617.3M564.5 563.6V613.1M565.5 563.2V616.7M566.5 563.6V617.2M567.5 563.6V613.5M568.5 571.7V614.1M569.5 571.6V613.4M570.5 570.3V618.0M571.5 563.7V616.9M572.5 562.3V613.5M573.5 562.9V617.0M574.5 562.3V613.4M575.5 571.9V617.1M576.5 571.8V617.1M577.5 576.8V618.7M578.5 562.2V614.7M579.5 562.2V618.8M580.5 563.1V614.4M581.5 562.2V618.9M582.5 572.9V614.7M583.5 573.7V623.0M584.5 570.5V627.3M585.5 576.9V626.6M586.5 572.0V618.6M587.5 570.7V617.9M588.5 570.7V618.7M589.5 573.7V618.8M590.5 573.7V610.2M591.5 556.5V612.9M592.5 553.6V618.0M593.5 554.2V607.0M594.5 571.6V627.0M595.5 575.3V627.0M596.5 575.3V627.0M597.5 572.5V619.0M598.5 577.5V621.2M599.5 577.5V615.1M600.5 577.5V617.7M601.5 565.1V616.8M602.5 567.2V617.8M603.5 563.1V617.8M604.5 563.1V611.3M605.5 563.1V616.8M606.5 574.6V618.8M607.5 576.2V618.9M608.5 576.2V618.9M609.5 573.3V611.5M610.5 572.8V611.6M611.5 561.0V604.6M612.5 561.6V618.2M613.5 563.6V614.1M614.5 561.0V615.4M615.5 571.6V615.5M616.5 573.0V619.2M617.5 573.0V623.3M618.5 572.1V624.8M619.5 572.1V619.9M620.5 575.6V617.9M621.5 574.7V619.9M622.5 572.1V620.0M623.5 572.8V614.4M624.5 572.8V620.1M625.5 568.1V619.7M626.5 568.8V616.6M627.5 568.1V621.6M628.5 568.1V621.6M629.5 571.2V618.4M630.5 573.4V621.7M631.5 573.4V621.8M632.5 573.5V621.6M633.5 574.2V620.1M634.5 574.2V620.2M635.5 576.0V619.9M636.5 575.4V617.7M637.5 552.8V625.5M638.5 552.8V625.1M639.5 551.9V625.6M640.5 571.5V624.1M641.5 571.5V624.1M642.5 572.9V624.2M643.5 569.2V623.0M644.5 569.2V622.0M645.5 567.7V623.1M646.5 568.8V624.1M647.5 567.8V622.9M648.5 567.8V624.2M649.5 563.8V617.0M650.5 561.0V617.0M651.5 556.8V620.1M652.5 586.1V602.1M653.5 586.1V602.1M654.5 586.1V600.0M655.5 586.4V600.0M656.5 586.4V600.0M657.5 586.1V600.0M658.5 586.1V600.1M659.5 586.1V600.1M660.5 586.1V600.1M661.5 587.0V600.1M662.5 587.0V600.1M663.5 587.0V600.1M664.5 587.0V600.1M665.5 587.3V600.1M666.5 587.3V600.5M667.5 587.3V600.5M668.5 587.3V600.5M669.5 587.3V600.5M670.5 587.3V600.5M671.5 587.3V600.5M672.5 602.2V617.0M673.5 602.2V617.0M674.5 602.2V617.0M675.5 602.4V617.0M676.5 602.4V617.0M677.5 601.8V617.4M678.5 601.8V617.4M679.5 601.8V621.6M680.5 601.8V621.6M681.5 601.8V621.6M682.5 601.8V621.6M683.5 600.2V621.6M684.5 600.2V621.6M685.5 603.0V617.6M686.5 603.0V617.6M687.5 603.0V617.6M688.5 603.0V617.6M689.5 603.7V617.6M690.5 603.7V617.6M691.5 603.7V618.1M692.5 603.7V618.1M693.5 603.7V618.1M694.5 603.7V620.4M695.5 603.6V620.4M696.5 603.6V620.4M697.5 600.9V620.4M698.5 600.9V620.2M699.5 603.3V620.2M700.5 603.3V621.7M701.5 603.8V621.7M702.5 603.8V621.7M703.5 603.8V619.6M704.5 603.8V619.6M705.5 598.7V617.6M706.5 598.7V617.6M707.5 598.7V617.6M708.5 602.5V617.6M709.5 602.5V618.8M710.5 602.5V618.8M711.5 603.0V618.8M712.5 603.0V618.0M713.5 603.0V618.0M714.5 603.0V618.0M715.5 603.9V618.0M716.5 603.9V619.7M717.5 603.9V619.7M718.5 598.8V619.7M719.5 598.8V619.7M720.5 598.8V619.7M721.5 598.8V620.2M722.5 598.8V620.2M723.5 598.8V620.2M724.5 598.8V620.2M725.5 598.8V620.2M726.5 598.8V618.7M727.5 598.8V618.7M728.5 602.3V618.7M729.5 602.3V617.6M730.5 600.2V617.6M731.5 600.2V617.6M732.5 602.3V617.6M733.5 603.2V617.6M734.5 603.2V617.1M735.5 603.2V617.1M736.5 603.1V617.1M737.5 603.1V617.1M738.5 603.1V617.1M739.5 603.1V618.5M740.5 603.1V620.7M741.5 603.1V620.7M742.5 600.5V620.7M743.5 600.5V620.7M744.5 600.5V618.5M745.5 600.5V617.9M746.5 600.5V617.9M747.5 600.5V618.9M748.5 600.5V618.9M749.5 600.5V618.9M750.5 600.5V617.8M751.5 602.9V617.8M752.5 602.9V617.8M753.5 602.9V617.2M754.5 602.8V617.2M755.5 602.8V617.2M756.5 598.2V617.4M757.5 598.2V617.4M758.5 601.8V617.4M759.5 601.8V617.4M760.5 601.8V617.4M761.5 601.8V620.4M762.5 603.4V620.4M763.5 603.4V620.4M764.5 603.4V617.3M765.5 598.8V617.3M766.5 598.8V617.3M767.5 598.8V620.8M768.5 600.0V620.8M769.5 600.0V620.8M770.5 601.4V620.8M771.5 601.4V617.3M772.5 601.4V622.2M773.5 601.4V622.2M774.5 604.0V619.3M775.5 604.0V620.4M776.5 604.0V620.4M777.5 604.0V620.4M778.5 604.0V621.4M779.5 604.0V621.4M780.5 603.1V621.4M781.5 603.1V621.4M782.5 603.1V621.4M783.5 603.9V618.4M784.5 603.9V618.4M785.5 603.9V618.4M786.5 603.9V620.1M787.5 603.9V620.1M788.5 603.9V617.0M789.5 603.9V617.0M790.5 603.9V617.0M791.5 603.9V621.2M792.5 603.6V621.2M793.5 603.6V621.2M794.5 603.6V620.8M795.5 603.6V620.8M796.5 603.6V620.8M797.5 603.6V620.8M798.5 603.1V619.8M799.5 603.1V619.8M800.5 603.1V620.7M801.5 603.1V620.7M802.5 603.1V620.7M803.5 603.1V620.7M804.5 603.8V620.7M805.5 603.8V617.3M806.5 603.8V617.3M807.5 603.8V617.3M808.5 603.8V618.3M809.5 603.8V618.3M810.5 599.6V618.3M811.5 599.6V617.2M812.5 599.6V617.2M813.5 600.9V617.2M814.5 600.9V618.3M815.5 602.8V620.1M816.5 602.8V620.1M817.5 602.8V620.1M818.5 602.8V618.3M819.5 602.8V622.2M820.5 602.4V622.2M821.5 602.4V622.2M822.5 602.4V617.4M823.5 602.4V617.4M824.5 602.4V617.4M825.5 603.5V617.1M826.5 603.5V617.1M827.5 603.4V617.1M828.5 603.4V617.1M829.5 603.7V617.1M830.5 603.7V618.3M831.5 603.7V618.3M832.5 603.7V618.3M833.5 603.7V618.3M834.5 603.7V618.3M835.5 599.3V617.0M836.5 599.3V617.0M837.5 599.8V617.0M838.5 603.2V617.0M839.5 603.2V617.0M840.5 603.2V617.0M841.5 603.2V617.1M842.5 603.2V617.1M843.5 602.5V617.1M844.5 602.5V617.1M845.5 601.8V617.1M846.5 601.8V620.3M847.5 601.8V620.3M848.5 603.8V620.3M849.5 603.8V620.3M850.5 603.8V619.0M851.5 602.8V618.9M852.5 602.8V618.9M853.5 602.8V618.9M854.5 602.8V617.0M855.5 601.7V617.0M856.5 601.7V617.0M864.5 644.5V659.1M865.5 644.5V659.1M866.5 644.5V659.1M867.5 644.5V661.9M868.5 644.5V661.9M869.5 644.5V661.9M870.5 648.5V661.9M871.5 648.5V661.9M872.5 648.5V661.9M873.5 648.5V659.0M874.5 648.5V659.0M875.5 648.5V659.0M876.5 647.4V660.4M877.5 647.4V660.4M878.5 647.3V660.4M879.5 646.5V660.4M880.5 646.5V661.6M881.5 646.5V661.6M882.5 646.5V659.2M883.5 647.3V662.4M884.5 649.0V662.4M885.5 649.0V662.4M886.5 649.0V662.4M887.5 649.0V659.4M888.5 643.9V659.4M889.5 643.9V659.4M890.5 643.9V659.4M891.5 643.9V659.4M892.5 648.4V659.4M893.5 648.4V660.7M894.5 648.4V660.7M895.5 648.4V662.0M896.5 648.7V662.0M897.5 648.7V662.0M898.5 648.7V662.0M899.5 648.7V660.6M900.5 647.8V660.6M901.5 647.8V660.6M902.5 647.7V660.6M903.5 647.7V660.6M904.5 648.4V659.1M905.5 648.4V659.1M906.5 648.4V659.1M907.5 648.4V663.7M908.5 648.4V663.7M909.5 648.4V663.7M910.5 648.4V659.1M911.5 648.4V659.1M912.5 648.4V659.1M913.5 648.4V659.1M914.5 647.2V659.1M915.5 647.2V659.1M916.5 647.2V659.1M917.5 647.2V659.5M918.5 647.8V659.5M919.5 647.8V659.5M920.5 647.8V659.5M921.5 647.8V659.5M922.5 647.8V659.5M923.5 647.8V664.2M924.5 643.9V664.2M925.5 643.9V664.2M926.5 648.5V664.2M927.5 648.5V659.7M928.5 648.5V659.7M929.5 643.8V659.7M930.5 643.8V659.7M931.5 647.9V659.7M932.5 647.9V661.3M933.5 648.6V661.3M934.5 648.6V661.3M935.5 645.5V661.3M936.5 645.5V661.3M937.5 645.5V661.3M938.5 645.5V659.5M939.5 647.8V659.5M940.5 645.7V659.5M941.5 645.7V659.5M942.5 645.7V659.5M943.5 645.7V659.5M944.5 645.7V663.7M945.5 649.0V663.7M946.5 649.0V663.7M947.5 649.0V659.5M948.5 647.0V659.5M949.5 647.0V659.5M950.5 647.0V659.5M951.5 644.6V659.5M952.5 644.6V662.3" stroke="#3d9c3d" stroke-width="1" fill="none" opacity="1"/><path d="M160.5 613.7V621.6M161.5 613.7V621.6M162.5 613.9V621.6M163.5 613.9V621.6M164.5 614.0V620.8M165.5 614.0V620.8M166.5 614.0V620.8M167.5 614.0V620.1M168.5 614.0V620.1M169.5 612.9V620.1M170.5 612.9V620.1M171.5 612.9V620.7M172.5 612.9V620.7M173.5 613.2V620.7M174.5 613.2V620.2M175.5 613.2V620.2M176.5 613.2V620.2M177.5 613.2V620.2M178.5 613.1V620.2M179.5 613.1V620.2M180.5 612.9V621.5M181.5 612.9V621.5M182.5 612.9V621.5M183.5 613.8V620.0M184.5 613.8V620.0M185.5 613.8V620.1M186.5 613.8V620.1M187.5 613.4V620.1M188.5 613.4V620.2M189.5 613.4V620.2M190.5 613.4V620.2M191.5 613.4V620.2M192.5 611.4V620.1M193.5 611.4V620.1M194.5 611.4V622.0M195.5 613.4V622.0M196.5 613.4V622.0M197.5 613.4V622.0M198.5 613.4V622.0M199.5 613.4V622.0M200.5 613.1V621.1M201.5 613.1V621.1M202.5 612.4V621.1M203.5 612.4V621.1M204.5 612.4V621.1M366.5 612.1V621.7M367.5 612.1V621.7M368.5 612.1V621.7M369.5 612.1V621.2M370.5 612.1V621.2M371.5 612.1V621.2M372.5 613.8V621.2M373.5 613.8V621.2M374.5 613.8V621.2M375.5 613.8V622.7M376.5 613.2V622.7M377.5 613.2V621.6M378.5 613.2V621.6M379.5 613.2V621.6M380.5 613.4V622.3M381.5 613.4V622.3M382.5 612.5V622.3M383.5 612.5V622.3M384.5 612.5V622.1M385.5 612.5V622.1M386.5 613.6V622.1M387.5 613.6V622.1M388.5 613.6V622.1M389.5 612.8V622.1M390.5 612.8V623.1M391.5 612.8V623.1M392.5 612.8V623.1M393.5 613.1V621.1M394.5 613.1V621.1M395.5 613.9V622.7M396.5 613.9V622.7M397.5 613.1V622.7M398.5 613.1V622.7M399.5 613.1V622.7M400.5 613.1V622.3M401.5 613.1V622.3M402.5 613.5V622.3M403.5 613.5V621.3M404.5 613.0V621.3M405.5 613.0V621.3M406.5 613.0V621.3M407.5 613.0V621.3M408.5 613.0V621.3M409.5 613.0V621.4M410.5 613.5V621.4M411.5 613.5V621.4M412.5 613.5V621.1M413.5 613.5V621.1M414.5 612.9V621.1M415.5 612.9V621.1M416.5 612.9V621.1M417.5 612.9V622.1M418.5 612.9V622.1M419.5 612.9V622.1M420.5 613.2V622.1M421.5 613.2V622.1M422.5 613.2V622.1M423.5 612.1V623.6M424.5 612.1V623.6M425.5 612.1V623.6M426.5 612.1V623.6M427.5 612.1V623.6M428.5 612.5V623.7M429.5 612.5V623.7" stroke="#4b5c08" stroke-width="1" fill="none" opacity="1"/><path d="M94.5 605.4V618.8M95.5 605.4V618.8M96.5 605.4V617.7M97.5 605.4V617.7M98.5 605.4V617.7M99.5 605.4V617.7M100.5 605.4V617.0M101.5 605.4V617.0M102.5 605.0V617.0M103.5 605.0V617.0M104.5 605.0V617.0M105.5 604.1V617.1M106.5 604.1V617.1M107.5 604.1V617.1M108.5 604.1V617.1M109.5 603.5V617.1M110.5 603.5V617.1M111.5 605.3V617.0M112.5 605.3V617.0M113.5 605.3V617.0M114.5 605.3V617.0M115.5 601.7V617.3M116.5 601.7V617.3M117.5 601.7V617.3M118.5 601.7V617.3M119.5 603.8V617.3M120.5 603.8V617.4M121.5 605.4V617.4M122.5 605.4V617.4M123.5 601.9V617.4M124.5 601.9V617.4M125.5 605.3V618.4M126.5 605.3V618.4M127.5 603.3V618.4M128.5 602.5V618.4M129.5 602.4V617.8M130.5 602.4V617.8M131.5 604.8V617.8M132.5 604.8V617.8M133.5 604.5V617.8M134.5 604.5V618.3M135.5 604.5V618.3M136.5 604.5V618.3M137.5 604.5V618.3M138.5 604.5V618.3M139.5 602.5V617.1M140.5 602.5V617.1M141.5 602.5V617.1M142.5 602.5V617.1M143.5 602.5V617.1M144.5 603.6V617.3M145.5 603.6V617.3M146.5 603.6V617.3M147.5 603.6V617.3M148.5 603.6V617.3M149.5 604.6V617.7M150.5 604.6V617.7M94.5 630.0V637.5M95.5 630.0V637.5M96.5 628.4V637.5M97.5 628.4V637.5M98.5 628.4V637.3M99.5 628.4V637.3M100.5 629.8V637.3M101.5 629.8V639.2M102.5 629.8V639.2M103.5 629.8V639.2M104.5 629.8V639.2M105.5 629.8V639.2M106.5 629.8V639.2M107.5 628.8V638.0M108.5 628.8V638.0M109.5 628.8V638.0M110.5 628.8V638.0M111.5 628.8V642.2M112.5 628.8V642.2M113.5 629.9V642.2M114.5 629.9V642.2M115.5 629.9V642.2M116.5 629.9V637.1M117.5 629.9V637.1M118.5 629.9V637.1M119.5 629.8V637.1M120.5 629.8V638.0M121.5 629.8V638.0M122.5 629.8V638.0M123.5 629.3V639.0M124.5 629.3V639.0M125.5 629.3V639.0M126.5 629.3V639.2M127.5 629.3V639.2M128.5 629.5V639.2M129.5 629.5V639.2M130.5 629.5V639.2M131.5 629.5V639.2M132.5 629.5V639.3M133.5 629.6V639.3M134.5 629.6V639.3M135.5 629.6V639.3M136.5 629.6V639.3M137.5 629.9V644.9M138.5 629.9V644.9M139.5 629.9V644.9M140.5 629.9V644.9M141.5 629.9V644.9M142.5 629.0V644.9M143.5 629.0V638.7M144.5 629.5V638.7M145.5 629.5V638.7M146.5 629.8V637.8M147.5 629.8V637.8M148.5 629.8V640.4M149.5 629.8V640.4M150.5 629.8V640.4M151.5 620.0V747.0M152.5 620.0V747.0M153.5 671.1V685.5M154.5 670.6V684.5M155.5 672.2V674.2M156.5 671.7V677.8M157.5 664.4V668.1M158.5 665.7V677.3M159.5 670.9V675.5M160.5 664.7V677.0M161.5 664.2V677.2M162.5 663.7V673.6M163.5 665.0V676.9M164.5 664.5V676.8M165.5 664.0V676.7M166.5 667.0V676.5M167.5 660.4V678.3M168.5 662.0V681.3M169.5 659.2V678.9M170.5 663.5V682.0M171.5 668.5V685.4M172.5 666.1V685.2M173.5 656.6V685.1M174.5 656.2V676.0M175.5 655.6V679.0M176.5 655.0V678.7M177.5 655.5V684.7M178.5 652.0V684.5M179.5 653.6V674.7M180.5 658.2V679.1M181.5 657.5V678.8M182.5 655.2V678.5M183.5 652.9V681.0M184.5 658.0V680.7M185.5 649.7V680.4M186.5 649.2V674.4M187.5 648.4V674.1M188.5 648.2V671.2M189.5 647.1V672.8M190.5 644.8V669.9M191.5 651.6V672.2M192.5 650.0V677.1M193.5 641.9V678.9M194.5 641.3V678.3M195.5 645.7V678.8M196.5 644.0V669.3M197.5 639.3V661.8M198.5 643.6V675.3M199.5 638.0V670.6M200.5 637.3V679.3M201.5 639.7V683.6M202.5 640.3V682.7M203.5 641.8V668.6M204.5 641.4V668.5M205.5 641.9V668.5M206.5 635.3V667.7M207.5 634.9V671.0M208.5 634.5V666.9M209.5 644.4V671.7M210.5 641.4V670.9M211.5 641.0V671.6M212.5 639.9V659.9M213.5 635.4V659.9M214.5 635.4V670.3M215.5 634.4V670.0M216.5 635.3V669.9M217.5 635.8V666.8M218.5 636.3V663.3M219.5 636.9V666.6M220.5 638.1V674.7M221.5 638.2V674.7M222.5 636.1V674.6M223.5 636.6V668.5M224.5 636.6V668.8M225.5 640.0V674.7M226.5 640.1V675.0M227.5 640.1V671.7M228.5 643.1V675.6M229.5 640.2V675.8M230.5 635.1V681.0M231.5 635.2V679.6M232.5 635.2V681.5M233.5 639.1V677.7M234.5 636.2V670.6M235.5 636.8V670.9M236.5 640.5V671.2M237.5 639.1V672.6M238.5 639.2V683.5M239.5 640.3V683.7M240.5 639.3V683.8M241.5 640.2V673.7M242.5 638.6V673.9M243.5 641.0V675.2M244.5 644.4V676.9M245.5 640.4V677.1M246.5 641.0V677.7M247.5 636.0V678.3M248.5 650.0V673.8M249.5 644.9V671.3M250.5 641.2V673.9M251.5 641.2V674.7M252.5 639.7V676.3M253.5 645.7V676.9M254.5 639.8V690.9M255.5 639.1V691.7M256.5 639.2V689.1M257.5 636.2V689.3M258.5 637.1V683.4M259.5 635.8V680.1M260.5 636.2V685.5M261.5 635.9V686.1M262.5 641.6V687.1M263.5 641.6V687.7M264.5 640.5V685.8M265.5 638.2V688.7M266.5 639.2V686.5M267.5 647.0V687.0M268.5 649.7V698.0M269.5 649.9V698.7M270.5 647.9V699.4M271.5 638.3V700.1M272.5 638.5V700.7M273.5 639.2V692.1M274.5 639.0V692.7M275.5 644.1V691.2M276.5 643.2V691.9M277.5 643.4V694.8M278.5 643.7V704.0M279.5 654.8V704.1M280.5 655.0V705.3M281.5 644.3V699.4M282.5 644.5V699.6M283.5 644.7V706.5M284.5 644.9V707.2M285.5 646.3V699.5M286.5 646.3V700.3M287.5 647.2V700.6M288.5 641.8V701.7M289.5 650.7V711.9M290.5 648.3V709.1M291.5 645.2V709.9M292.5 652.8V711.5M293.5 644.8V707.4M294.5 646.3V703.7M295.5 646.1V702.7M296.5 645.9V705.2M297.5 645.7V706.1M298.5 657.9V706.8M299.5 643.7V707.5M292.5 645.9V718.8M293.5 639.3V719.4M294.5 638.9V720.5M295.5 638.8V721.1M296.5 639.3V721.7M297.5 639.0V719.3M298.5 631.9V719.9M299.5 635.1V720.5M300.5 636.1V721.1M301.5 635.8V721.7M302.5 640.9V722.3M303.5 635.1V734.1M292.5 700.0V747.0M293.5 700.0V747.0M293.5 690.0V745.0M304.5 628.0V643.7M305.5 626.5V649.8M306.5 625.6V649.0M307.5 625.4V648.6M308.5 624.4V648.7M309.5 620.6V646.3M310.5 619.7V645.4M311.5 621.5V646.1M312.5 613.6V645.3M313.5 612.6V642.9M314.5 616.8V643.6M315.5 620.2V642.2M316.5 616.7V643.4M317.5 615.7V643.0M318.5 614.3V640.5M319.5 609.9V637.9M320.5 607.2V635.2M321.5 604.8V630.1M322.5 603.1V627.4M323.5 601.5V623.5M324.5 599.0V613.3M325.5 599.1V614.2M326.5 593.5V620.3M327.5 591.2V617.3M328.5 588.9V614.6M329.5 586.5V612.3M330.5 591.6V601.5M333.5 600.0V744.0M334.5 600.0V744.0M335.5 663.4V698.8M336.5 662.8V707.6M337.5 660.3V698.8M338.5 661.0V704.5M339.5 662.0V707.3M340.5 669.7V706.7M341.5 670.4V706.7M342.5 662.1V705.4M343.5 661.9V706.9M344.5 661.6V706.9M345.5 661.3V706.9M346.5 661.1V708.7M347.5 658.1V708.7M348.5 671.0V706.6M349.5 658.9V706.1M350.5 654.3V705.9M351.5 653.8V705.9M352.5 655.2V706.1M353.5 658.5V704.5M354.5 658.0V704.8M355.5 657.5V705.7M356.5 657.0V705.7M357.5 656.5V703.8M358.5 651.3V706.2M359.5 651.9V703.8M360.5 650.3V720.0M361.5 649.8V717.8M362.5 649.9V718.1M363.5 649.1V706.9M364.5 648.6V706.9M365.5 652.5V703.9M366.5 655.6V706.9M367.5 651.5V706.9M368.5 646.4V703.2M369.5 643.5V703.1M370.5 648.8V706.4M371.5 644.6V706.1M372.5 644.2V705.7M373.5 652.6V702.3M374.5 656.0V714.2M375.5 647.4V709.0M376.5 647.0V713.4M377.5 648.3V712.5M378.5 646.2V712.6M379.5 657.2V706.3M380.5 645.4V706.2M381.5 645.9V705.7M382.5 643.0V703.7M383.5 642.3V705.0M384.5 640.6V709.1M385.5 639.8V707.8M386.5 639.0V707.4M387.5 639.0V707.0M388.5 637.8V701.0M389.5 648.5V698.2M390.5 641.2V697.8M391.5 643.5V697.3M392.5 640.4V697.1M393.5 640.1V696.5M394.5 642.0V696.0M395.5 640.8V695.1M396.5 631.8V695.4M397.5 635.9V695.4M398.5 635.8V705.6M399.5 635.4V705.0M400.5 635.1V703.3M401.5 634.7V692.7M402.5 634.3V691.1M403.5 648.2V690.6M404.5 634.5V691.2M405.5 641.1V688.7M406.5 633.9V694.8M407.5 633.4V694.6M408.5 633.1V694.1M409.5 640.2V693.6M410.5 634.2V689.4M411.5 636.8V688.4M412.5 634.0V692.7M413.5 636.0V698.2M414.5 627.2V697.5M415.5 627.1V697.1M416.5 626.9V694.8M417.5 626.8V691.1M418.5 633.8V690.4M419.5 632.6V690.1M420.5 633.4V687.6M421.5 632.6V687.3M422.5 632.1V689.1M423.5 632.3V688.7M424.5 632.7V689.7M425.5 632.6V692.8M426.5 629.6V685.5M427.5 635.2V683.4M428.5 629.4V684.8M429.5 631.5V682.7M430.5 631.7V682.5M431.5 638.8V680.6M432.5 632.0V688.6M433.5 631.9V687.0M434.5 631.4V693.7M435.5 643.2V688.9M436.5 631.1V692.2M437.5 631.2V671.8M438.5 631.1V686.9M439.5 627.0V688.0M440.5 625.8V685.5M441.5 629.9V685.8M442.5 631.0V673.3M443.5 627.8V671.6M444.5 627.7V673.1M445.5 627.5V681.4M446.5 627.4V680.8M447.5 634.4V679.7M448.5 629.2V679.0M449.5 629.8V677.9M450.5 629.8V670.0M451.5 629.8V665.4M452.5 628.5V671.7M453.5 632.9V676.8M454.5 628.5V676.3M455.5 628.5V675.8M456.5 628.6V674.4M457.5 634.3V664.6M458.5 635.2V664.1M459.5 632.1V662.5M460.5 632.1V660.6M461.5 628.8V660.5M462.5 629.6V660.5M463.5 628.7V660.0M464.5 629.2V660.2M465.5 628.7V659.9M466.5 628.7V657.9M467.5 632.1V656.4M468.5 628.3V658.4M469.5 628.3V657.9M470.5 628.3V669.3M471.5 628.2V668.9M472.5 629.7V669.3M473.5 627.2V666.4M474.5 625.7V656.3M475.5 636.7V661.1M476.5 625.7V660.8M477.5 629.2V662.8M478.5 630.7V662.3M479.5 629.1V662.2M480.5 630.1V654.1M481.5 633.9V653.8M482.5 625.4V655.3M483.5 625.4V659.6M484.5 625.3V652.8M485.5 625.3V652.6M486.5 625.3V652.3M487.5 625.3V650.5M488.5 630.2V650.1M489.5 630.2V649.9M490.5 629.0V650.9M491.5 629.4V652.0M492.5 624.0V651.7M493.5 625.1V649.0M494.5 628.3V651.0M495.5 628.3V650.7M496.5 635.3V654.9M497.5 628.3V654.6M498.5 628.6V651.3M499.5 627.9V651.0M500.5 627.9V650.3M501.5 627.9V651.4M502.5 627.9V650.6M503.5 629.2V652.0M504.5 630.7V643.2M505.5 630.6V646.3M506.5 632.8V644.7M507.5 622.0V643.8M508.5 627.8V654.5M509.5 623.4V654.2M510.5 629.1V654.0M511.5 625.7V647.1M512.5 623.4V646.9M513.5 623.4V646.7M514.5 623.4V646.6M515.5 627.2V643.9M516.5 627.1V635.1M517.5 626.4V643.5M518.5 630.0V635.9M519.5 622.8V643.1M520.5 625.9V642.9M521.5 623.1V642.7M522.5 622.8V651.1M523.5 628.6V651.0M524.5 628.6V649.5M525.5 628.6V649.5M526.5 628.6V649.3M527.5 628.9V650.4M528.5 629.4V647.6M529.5 629.0V650.0M530.5 635.4V645.7M531.5 629.0V641.1M532.5 641.0V652.5M533.5 635.5V649.3M534.5 635.6V652.4M535.5 623.2V641.6M536.5 623.3V641.7M537.5 623.3V641.4M538.5 623.4V641.6M539.5 629.2V650.3M540.5 629.2V650.4M541.5 629.3V652.6M542.5 628.8V640.1M543.5 628.9V643.0M544.5 634.4V643.1M545.5 634.5V642.5M546.5 629.7V652.1M547.5 633.5V656.3M548.5 629.8V656.4M549.5 625.3V656.4M550.5 630.5V656.7M551.5 625.4V656.8M552.5 634.5V644.6M553.5 628.8V644.7M554.5 628.9V650.2M555.5 623.1V647.3M556.5 623.1V644.4M557.5 628.3V650.6M558.5 624.1V644.5M559.5 623.2V650.6M560.5 625.3V643.4M561.5 629.1V649.0M562.5 624.0V649.4M563.5 629.0V657.6M564.5 629.1V655.4M565.5 629.3V648.7M566.5 629.3V654.4M567.5 630.2V652.9M568.5 625.9V655.2M569.5 631.4V655.6M570.5 630.3V649.5M571.5 630.3V649.9M572.5 630.4V650.3M573.5 628.5V647.8M574.5 628.5V651.1M575.5 628.6V641.0M576.5 628.6V642.9M577.5 638.8V652.4M578.5 633.2V650.0M579.5 630.7V654.6M580.5 630.7V655.0M581.5 633.4V655.1M582.5 630.8V666.8M583.5 629.9V667.2M584.5 629.9V667.1M585.5 630.6V667.5M586.5 639.2V668.4M587.5 630.0V658.3M588.5 624.3V654.5M589.5 632.8V661.3M590.5 632.8V662.7M591.5 632.9V660.9M592.5 629.8V663.8M593.5 629.1V664.2M594.5 629.2V664.2M595.5 629.5V665.0M596.5 624.8V665.4M597.5 624.9V661.6M598.5 635.4V661.0M599.5 636.0V662.4M600.5 636.4V667.9M601.5 631.8V668.2M602.5 631.5V664.2M603.5 631.6V664.5M604.5 632.8V661.9M605.5 624.5V667.1M606.5 627.3V662.4M607.5 633.9V663.0M608.5 634.0V672.7M609.5 633.2V673.4M610.5 625.4V674.0M611.5 627.4V679.1M612.5 625.4V676.1M613.5 638.3V682.0M614.5 631.6V677.4M615.5 632.2V669.6M616.5 634.6V670.3M617.5 635.9V672.6M618.5 631.7V672.4M619.5 636.1V674.0M620.5 631.9V676.8M621.5 634.3V671.9M622.5 634.3V672.6M623.5 628.1V679.7M624.5 628.1V680.3M625.5 629.8V678.8M626.5 629.8V679.4M627.5 628.2V678.9M628.5 632.0V682.5M629.5 632.0V682.5M630.5 632.5V683.7M631.5 632.6V684.9M632.5 641.2V686.5M633.5 639.4V687.7M634.5 636.1V689.3M635.5 630.8V698.3M636.5 630.8V701.3M637.5 629.7V702.5M638.5 630.6V703.7M639.5 629.7V705.0M640.5 629.8V692.7M641.5 630.1V694.0M642.5 630.1V695.2M643.5 629.8V700.3M644.5 638.3V694.6M645.5 637.9V704.7M646.5 637.9V705.9M647.5 637.9V705.1M648.5 628.8V704.4M649.5 639.4V701.3M650.5 629.1V706.0M651.5 632.7V707.2M652.5 632.8V706.8M653.5 640.0V717.0M654.5 640.0V717.0M655.5 595.2V642.4M656.5 595.3V642.4M657.5 589.2V642.4M658.5 589.4V642.4M659.5 589.5V642.5M660.5 589.6V642.5M661.5 594.9V645.0M662.5 595.0V645.0M663.5 596.5V645.0M664.5 596.7V642.8M665.5 596.9V642.8M666.5 597.0V642.8M667.5 597.1V644.7M668.5 597.3V644.7M669.5 597.4V644.7M670.5 597.1V644.7M671.5 597.2V644.7M673.5 650.9V666.2M674.5 650.9V666.2M675.5 650.9V666.2M676.5 650.9V665.5M677.5 650.9V665.5M678.5 650.9V665.5M679.5 647.4V665.3M680.5 647.4V665.3M681.5 647.4V665.3M682.5 648.6V665.3M683.5 649.9V665.3M684.5 649.9V667.9M685.5 649.9V667.9M686.5 649.9V667.9M687.5 649.9V667.9M688.5 650.8V665.6M689.5 650.8V665.5M690.5 650.8V665.5M691.5 650.8V665.5M692.5 650.8V665.5M693.5 650.8V666.6M694.5 651.2V666.6M695.5 651.2V666.6M696.5 651.2V666.6M697.5 646.9V666.6M698.5 646.9V671.3M699.5 646.9V671.3M700.5 651.1V671.3M701.5 651.1V671.3M702.5 651.1V671.3M703.5 651.1V665.0M704.5 651.2V665.0M705.5 651.2V668.0M706.5 651.2V668.0M707.5 651.2V668.0M708.5 651.2V666.9M709.5 648.6V666.9M710.5 648.6V666.9M711.5 648.6V665.7M712.5 647.6V665.7M713.5 647.6V665.7M714.5 647.6V665.7M715.5 647.6V665.7M716.5 651.3V665.4M717.5 651.3V665.4M718.5 651.2V665.4M719.5 651.2V665.4M720.5 651.2V669.3M721.5 647.8V669.3M722.5 647.8V669.3M723.5 647.8V669.3M724.5 647.8V669.3M725.5 649.1V669.3M726.5 651.4V669.2M727.5 651.4V669.2M728.5 645.9V665.7M729.5 645.9V665.7M730.5 645.9V665.7M731.5 645.9V665.7M732.5 645.9V665.7M733.5 649.9V665.7M734.5 649.9V665.7M735.5 649.9V665.7M736.5 649.9V665.7M737.5 649.9V665.2M738.5 650.2V665.2M739.5 650.2V666.6M740.5 650.2V666.6M741.5 650.2V666.5M742.5 650.2V666.5M743.5 650.2V666.5M744.5 649.6V666.5M745.5 649.6V667.4M746.5 649.6V667.4M747.5 649.6V667.4M748.5 649.6V669.4M749.5 649.6V669.4M750.5 651.2V669.4M751.5 651.2V669.4M752.5 651.2V666.8M753.5 647.0V666.8M754.5 647.0V666.8M755.5 647.0V666.8M756.5 647.0V668.0M757.5 647.0V668.2M758.5 647.0V668.2M759.5 650.0V668.2M760.5 650.0V668.2M761.5 650.0V668.0M762.5 648.3V671.3M763.5 647.8V671.3M764.5 647.8V671.3M765.5 648.3V671.3M766.5 651.1V671.3M767.5 651.1V665.6M768.5 651.1V665.6M769.5 651.1V665.6M770.5 651.1V665.6M771.5 651.1V669.6M772.5 650.8V669.6M773.5 650.8V669.6M774.5 648.8V669.6M775.5 648.8V669.6M776.5 648.8V665.5M777.5 648.8V665.5M778.5 651.2V665.5M779.5 651.2V665.5M780.5 651.4V665.5M781.5 651.4V665.5M782.5 651.4V666.0M783.5 651.4V666.0M784.5 647.3V665.0M785.5 647.3V665.0M786.5 650.8V667.6M787.5 650.8V667.6M788.5 650.8V667.6M789.5 650.8V667.6M790.5 650.5V667.6M791.5 650.5V667.6M792.5 645.2V668.0M793.5 645.2V668.0M794.5 645.2V668.0M795.5 650.0V668.0M796.5 650.0V668.0M797.5 650.0V668.0M798.5 650.0V669.3M799.5 647.5V669.3M800.5 647.5V669.3M801.5 649.6V669.3M802.5 649.6V668.5M803.5 649.6V668.5M804.5 649.6V668.5M805.5 649.2V668.5M806.5 647.7V668.5M807.5 647.7V665.8M808.5 647.7V669.3M809.5 647.7V669.3M810.5 649.2V665.8M811.5 648.2V665.8M812.5 648.2V665.8M813.5 648.3V665.8M814.5 648.3V665.8M815.5 648.3V665.8M816.5 648.3V665.6M817.5 648.3V665.6M818.5 648.0V665.6M819.5 648.0V665.6M820.5 648.0V669.3M821.5 648.0V669.3M822.5 648.0V668.0M823.5 648.0V668.0M824.5 648.4V668.0M825.5 650.0V667.9M826.5 650.0V667.9M827.5 651.4V665.1M828.5 651.4V665.1M829.5 651.4V669.7M830.5 651.4V669.7M831.5 648.3V669.7M832.5 648.3V669.7M833.5 648.3V669.3M834.5 648.3V669.3M835.5 651.1V667.3M836.5 651.1V667.3M837.5 651.1V665.3M838.5 646.7V669.2M839.5 646.7V669.2M840.5 646.7V669.2M841.5 650.6V669.2M842.5 650.6V665.5M843.5 650.6V665.5M844.5 648.0V665.1M845.5 648.0V665.1M846.5 648.0V665.1M847.5 648.0V665.7M848.5 650.3V665.7M849.5 650.3V665.7M850.5 650.3V665.7M851.5 650.3V665.7M852.5 650.3V667.8M853.5 651.0V667.8M854.5 651.0V667.8M855.5 651.0V667.8M856.5 651.5V665.3M857.5 647.0V665.3M858.5 647.0V665.3M859.5 647.0V665.3M860.5 649.5V668.9M861.5 649.5V668.9M862.5 649.5V668.9M863.5 649.5V668.9M817.5 660.0V692.0M863.5 597.0V665.0M864.5 597.0V665.0M865.5 600.8V620.2M866.5 600.8V620.2M867.5 600.8V620.2M868.5 605.9V620.2M869.5 605.9V620.0M870.5 605.9V620.0M871.5 605.9V619.1M872.5 603.9V619.1M873.5 603.9V619.1M874.5 603.9V619.7M875.5 603.9V619.7M876.5 603.9V619.7M877.5 593.0V620.3M878.5 593.0V620.3M879.5 604.8V620.3M880.5 604.8V620.3M881.5 604.8V620.2M882.5 604.8V620.2M883.5 604.8V620.3M884.5 603.2V620.3M885.5 603.2V620.3M886.5 603.2V620.3M887.5 605.3V619.1M888.5 605.3V619.1M889.5 605.3V619.1M890.5 605.3V619.1M891.5 605.3V619.1M892.5 605.3V619.1M893.5 603.2V619.9M894.5 603.2V619.9M895.5 603.2V619.9M896.5 603.2V619.9M897.5 603.2V619.9M898.5 592.0V619.9M899.5 592.0V619.6M900.5 592.0V619.6M901.5 592.0V619.0M902.5 605.9V619.0M903.5 605.9V619.0M904.5 605.9V619.0M905.5 594.6V619.9M906.5 594.6V619.9M907.5 594.6V619.9M908.5 594.6V619.9M909.5 605.8V619.9M910.5 605.0V619.9M911.5 605.0V619.4M912.5 603.5V619.4M913.5 603.5V619.4M914.5 603.5V619.4M915.5 603.5V619.4M916.5 603.8V619.4M917.5 603.8V619.4M918.5 603.8V619.4M919.5 603.8V619.4M920.5 606.0V619.4M921.5 593.8V619.4M922.5 593.8V620.6M923.5 602.3V620.6M924.5 602.3V620.6M925.5 602.3V620.6M926.5 605.9V619.9M927.5 593.2V619.9M928.5 593.2V619.9M929.5 605.4V619.9M930.5 605.4V619.9M931.5 605.4V619.9M932.5 605.4V621.8M933.5 605.4V621.8M934.5 600.5V621.8M935.5 600.5V621.8M936.5 600.5V621.8M937.5 601.7V621.8M938.5 601.7V621.8M939.5 601.7V621.8M940.5 601.7V621.8M941.5 601.7V621.8M942.5 602.8V619.3M943.5 602.8V619.3M944.5 602.8V619.3M945.5 602.8V619.3M946.5 592.8V619.2M947.5 592.8V619.2M948.5 592.8V621.3M949.5 605.8V621.3M950.5 603.0V621.3M951.5 603.0V620.2M952.5 595.4V620.2M953.5 595.4V620.2M954.5 595.4V619.5M955.5 605.9V619.5M956.5 602.7V619.5M957.5 602.7V619.5M958.5 602.7V619.5M959.5 602.7V619.5M960.5 602.7V620.2M961.5 601.3V620.2M914.5 577.0V606.0M865.5 629.7V640.4M866.5 629.7V640.4M867.5 629.7V641.7M868.5 629.7V641.7M869.5 629.7V641.7M870.5 629.2V641.7M871.5 629.2V641.7M872.5 629.9V641.8M873.5 629.9V641.8M874.5 629.9V638.6M875.5 629.9V638.6M876.5 629.9V638.6M877.5 629.9V638.6M878.5 629.3V641.1M879.5 629.3V641.1M880.5 629.9V641.1M881.5 629.9V641.1M882.5 629.9V646.8M883.5 629.9V646.8M884.5 629.9V638.9M885.5 629.9V638.9M886.5 629.4V638.9M887.5 629.4V638.9M888.5 629.4V638.8M889.5 629.4V638.8M890.5 629.4V638.8M891.5 629.4V640.5M892.5 628.9V640.5M893.5 628.9V638.8M894.5 628.9V638.9M895.5 628.9V638.9M896.5 628.9V638.9M897.5 628.9V638.9M898.5 627.2V638.9M899.5 627.2V638.9M900.5 627.2V638.5M901.5 627.2V638.5M902.5 627.2V638.5M903.5 627.2V638.5M904.5 627.2V638.5M905.5 627.2V638.0M906.5 628.2V640.5M907.5 628.2V640.5M908.5 628.2V638.5M909.5 628.8V638.5M910.5 628.8V638.5M911.5 628.8V638.5M912.5 630.0V642.8M913.5 630.0V642.8M914.5 630.0V642.8M915.5 630.0V638.0M916.5 630.0V638.0M917.5 629.7V638.0M918.5 629.7V638.0M919.5 629.7V638.0M920.5 629.7V638.0M921.5 629.7V639.9M922.5 629.7V639.9M923.5 629.8V639.8M924.5 629.8V639.8M925.5 629.8V639.8M926.5 629.8V641.2M927.5 627.3V641.2M928.5 627.3V641.2M929.5 627.3V641.2M930.5 627.3V641.2M931.5 627.3V641.2M932.5 627.3V638.6M933.5 629.7V638.6M934.5 629.7V638.6M935.5 629.7V638.6M936.5 629.7V641.1M937.5 629.7V641.1M938.5 629.2V641.1M939.5 629.2V641.1M940.5 629.8V642.3M941.5 629.8V642.3M942.5 629.8V642.3M943.5 629.8V642.3M944.5 629.8V638.2M945.5 629.8V642.3M946.5 628.0V642.3M947.5 628.0V639.0M948.5 628.0V639.0M949.5 628.0V638.4M950.5 628.0V643.4M951.5 628.0V643.4M952.5 629.0V643.4M953.5 629.0V638.4M954.5 629.0V638.4M955.5 629.0V640.1M956.5 629.0V640.1M957.5 629.4V640.1M958.5 629.4V639.5M959.5 629.4V639.5M960.5 629.2V639.9M961.5 629.2V639.9M539.5 605.0V632.0M540.5 605.0V632.0M562.5 607.6V632.0M563.5 607.6V632.0M564.5 607.6V632.0M575.5 608.7V632.0M576.5 608.7V632.0M577.5 608.7V632.0M584.5 604.0V632.0M585.5 604.0V632.0M627.5 604.3V632.0M628.5 604.3V632.0M629.5 604.3V632.0M637.5 606.2V632.0M638.5 606.2V632.0M639.5 606.2V632.0M647.5 617.1V632.0M648.5 617.1V632.0M649.5 617.1V632.0" stroke="#0000ff" stroke-width="1" fill="none" opacity="1"/><path d="M336.5 633.5V670.7M337.5 633.5V675.7M338.5 633.5V657.7M339.5 633.5V674.6M340.5 633.5V665.5M341.5 633.5V668.8M342.5 633.6V664.1M343.5 633.6V667.7M344.5 633.6V663.0M345.5 633.6V653.3M346.5 633.6V652.7M347.5 633.6V652.1M348.5 633.6V665.4M349.5 633.6V664.2M350.5 633.1V655.4M351.5 633.1V655.3M352.5 633.1V659.0M353.5 631.3V663.0M354.5 631.3V662.0M355.5 631.3V662.1M356.5 631.3V646.4M357.5 633.7V657.0M358.5 633.7V654.4M359.5 633.7V654.1M360.5 633.7V645.1M361.5 633.7V652.5M362.5 633.7V649.4M363.5 632.0V648.4M364.5 632.0V642.2M365.5 632.0V635.8M366.5 632.0V646.4M367.5 632.0V645.5M368.5 633.1V644.6M369.5 633.1V649.3M370.5 633.1V648.4M371.5 633.1V647.5M372.5 633.1V646.6M373.5 633.6V643.5M374.5 633.6V644.8M375.5 633.6V638.8" stroke="#3d9c3d" stroke-width="1" fill="none" opacity="1"/><path d="M94.5 623.5V627.7M95.5 623.5V627.7M96.5 623.1V627.7M97.5 623.1V627.7M98.5 623.1V627.7M99.5 623.1V629.2M100.5 623.1V629.2M101.5 623.1V629.2M102.5 623.9V629.2M103.5 623.9V629.2M104.5 623.1V629.2M105.5 623.1V629.2M106.5 623.8V629.2M107.5 623.8V629.2M108.5 623.8V629.2M109.5 623.9V629.2M110.5 623.9V628.0M111.5 623.9V628.0M112.5 622.2V628.0M113.5 622.2V628.0M114.5 622.2V627.8M115.5 622.2V627.8M116.5 622.2V627.8M117.5 623.3V628.1M118.5 623.3V628.1M119.5 623.3V628.1M120.5 623.8V628.1M121.5 623.8V628.1M122.5 623.9V627.7M123.5 623.9V627.7M124.5 623.8V627.7M125.5 623.8V627.7M126.5 623.8V627.7M127.5 623.2V627.8M128.5 623.2V627.8M129.5 623.2V627.8M130.5 623.2V627.8M131.5 624.0V627.8M132.5 624.0V628.4M133.5 623.9V628.4M134.5 623.9V628.4M135.5 623.9V628.4M136.5 623.9V627.9M137.5 623.9V627.9M138.5 623.4V627.9M139.5 623.4V628.2M140.5 623.7V628.2M141.5 623.7V628.2M142.5 623.7V628.2M143.5 623.7V628.2M144.5 622.2V628.2M145.5 622.2V628.2M146.5 622.2V628.2M147.5 622.2V628.2M148.5 622.2V627.8M149.5 624.0V627.8M150.5 624.0V627.8M151.5 618.9V624.4M152.5 618.8V624.3M153.5 618.6V624.1M154.5 618.5V624.0M155.5 618.4V623.8M156.5 618.2V623.7M157.5 618.1V622.5M158.5 617.9V622.4M159.5 617.8V622.2M160.5 617.7V622.1M161.5 617.5V622.0M162.5 617.4V621.8M163.5 616.9V621.5M164.5 616.7V621.3M165.5 616.6V621.2M166.5 616.7V621.3M167.5 616.8V621.4M168.5 616.9V621.5M169.5 617.4V621.5M170.5 617.5V621.6M171.5 617.6V621.7M172.5 617.4V621.8M173.5 617.5V621.9M174.5 617.7V622.1M175.5 617.8V622.2M176.5 618.1V622.5M177.5 618.2V622.6M178.5 618.3V622.7M179.5 618.4V622.8M180.5 618.5V622.9M181.5 618.6V622.6M182.5 618.7V622.7M183.5 618.8V623.8M184.5 618.9V623.9M185.5 619.0V624.0M186.5 619.2V624.2M187.5 618.9V624.5M188.5 619.2V624.7M189.5 619.4V624.0M190.5 619.7V624.3M191.5 619.9V624.5M192.5 620.2V625.6M193.5 620.5V625.9M194.5 620.8V626.1M195.5 621.0V625.7M196.5 621.4V625.9M197.5 621.6V626.3M198.5 621.9V626.5M199.5 622.1V626.8M200.5 621.4V627.1M201.5 621.7V627.3M202.5 621.9V627.6M203.5 623.4V627.8M204.5 623.7V628.0M205.5 623.9V628.3M206.5 624.2V628.5M207.5 624.0V628.8M208.5 624.2V629.0M209.5 624.5V629.3M210.5 624.7V629.5M211.5 625.0V629.9M212.5 625.2V630.1M213.5 625.6V630.4M214.5 625.8V630.6M215.5 626.1V630.9M216.5 626.3V631.1M217.5 626.8V631.1M218.5 627.0V631.3M219.5 627.3V631.6M220.5 627.5V631.8M221.5 627.8V632.1M222.5 628.0V633.3M223.5 628.1V633.6M224.5 628.4V633.8M225.5 628.2V633.4M226.5 628.3V633.5M227.5 628.4V633.6M228.5 628.5V633.9M229.5 628.5V634.0M230.5 628.6V634.0M231.5 628.6V634.1M232.5 628.7V634.2M233.5 628.7V634.5M234.5 628.8V634.6M235.5 628.9V634.6M236.5 629.6V634.7M237.5 629.7V634.8M238.5 629.8V634.9M239.5 629.9V634.0M240.5 629.9V634.1M241.5 629.9V634.2M242.5 630.0V634.2M243.5 630.1V634.3M244.5 630.1V634.4M245.5 630.4V634.6M246.5 630.4V634.7M247.5 630.5V634.8M248.5 630.6V634.9M249.5 629.7V634.9M250.5 629.8V635.6M251.5 630.8V635.6M252.5 630.9V635.1M253.5 631.0V635.2M254.5 631.0V635.2M255.5 631.1V635.3M256.5 631.2V635.3M257.5 630.8V635.4M258.5 630.9V635.5M259.5 631.0V635.5M260.5 631.1V635.6M261.5 631.1V635.7M262.5 629.9V635.8M263.5 630.0V635.9M264.5 631.6V636.0M265.5 631.6V636.1M266.5 631.8V636.2M267.5 631.8V636.3M268.5 631.8V636.2M269.5 631.7V636.1M270.5 631.3V636.0M271.5 631.3V635.9M272.5 631.2V635.8M273.5 631.2V635.8M274.5 631.1V635.7M275.5 631.1V635.7M276.5 631.0V636.8M277.5 631.0V636.8M278.5 630.9V635.6M279.5 630.8V635.6M280.5 630.8V636.0M281.5 630.9V636.0M282.5 630.9V635.9M283.5 630.8V635.9M284.5 630.4V636.6M285.5 630.3V636.5M286.5 629.9V636.1M287.5 628.4V635.6M288.5 627.9V634.7M289.5 627.5V634.2M290.5 627.0V633.8M291.5 627.8V633.4M292.5 627.4V632.9M293.5 626.9V631.7M294.5 626.8V631.3M295.5 626.4V630.8M296.5 625.9V630.4M297.5 625.5V629.9M298.5 625.0V629.5M299.5 624.6V629.1M300.5 624.2V628.6M301.5 623.7V628.2M302.5 623.3V627.7M303.5 622.8V627.5M304.5 622.3V627.0M305.5 620.1V626.1M306.5 619.6V625.6M307.5 619.1V625.1M308.5 620.5V624.6M309.5 620.0V624.1M310.5 619.4V623.8M311.5 618.9V623.3M312.5 618.4V622.8M313.5 617.9V622.5M314.5 617.4V622.0M315.5 616.9V621.5M316.5 616.0V620.8M317.5 615.2V620.3M318.5 614.3V619.5M319.5 612.7V618.8M320.5 611.8V617.7M321.5 611.0V616.9M322.5 610.4V616.2M323.5 609.5V615.5M324.5 608.7V614.8M325.5 607.8V614.1M326.5 606.9V614.2M327.5 606.0V613.5M328.5 605.2V611.8M329.5 604.3V611.1M330.5 605.9V612.0M331.5 606.9V612.9M332.5 606.4V613.8M333.5 607.4V614.7M334.5 608.4V616.0M335.5 609.4V616.9M336.5 610.4V617.8M337.5 612.8V618.4M338.5 613.8V619.2M339.5 614.3V619.7M340.5 614.9V620.1M341.5 615.0V620.1M342.5 615.0V620.2M343.5 615.0V620.2M344.5 615.1V620.3M345.5 615.1V620.3M346.5 615.2V620.3M347.5 615.2V620.4M348.5 615.3V620.4M349.5 615.3V621.3M350.5 615.4V621.4M351.5 615.0V621.4M352.5 615.0V621.4M353.5 615.0V621.5M354.5 615.0V621.5M355.5 615.0V621.5M356.5 615.1V621.5M357.5 615.1V621.6M358.5 615.1V621.6M359.5 613.8V621.7M360.5 613.8V621.7M361.5 613.9V620.9M362.5 613.9V620.9M363.5 615.8V621.0M364.5 615.9V621.0M365.5 615.9V621.1M366.5 615.9V621.1M367.5 616.0V621.5M368.5 616.0V621.5M369.5 616.0V621.5M370.5 616.0V621.5M371.5 616.1V621.5M372.5 616.1V621.5M373.5 616.1V621.3M374.5 616.1V621.3M375.5 615.5V621.3M376.5 615.5V621.3M377.5 615.5V621.3M378.5 615.3V621.6M379.5 615.3V621.6M380.5 615.3V621.6M381.5 615.3V621.6M382.5 615.3V621.6M383.5 616.1V621.6M384.5 616.1V621.6M385.5 616.2V621.6M386.5 616.2V621.7M387.5 616.2V621.7M388.5 614.5V621.7M389.5 614.5V621.3M390.5 614.5V621.3M391.5 614.5V621.3M392.5 614.6V621.3M393.5 614.6V621.3M394.5 616.3V621.1M395.5 616.4V621.1M396.5 616.4V621.1M397.5 616.4V621.1M398.5 616.4V621.1M399.5 616.4V621.4M400.5 614.4V621.4M401.5 614.4V621.4M402.5 614.5V621.8M403.5 616.3V621.8M404.5 616.4V621.8M405.5 616.4V621.8M406.5 616.2V621.8M407.5 616.2V621.0M408.5 616.2V621.0M409.5 616.3V621.0M410.5 616.3V621.0M411.5 616.2V621.0M412.5 616.2V621.3M413.5 616.6V621.3M414.5 616.6V621.7M415.5 616.2V621.7M416.5 616.2V621.7M417.5 616.2V621.7M418.5 616.2V621.7M419.5 616.2V621.7M420.5 616.7V621.3M421.5 616.7V621.3M422.5 616.7V621.3M423.5 616.7V621.3M424.5 616.7V621.3M425.5 616.1V621.3M426.5 616.1V621.3M427.5 616.1V621.3M428.5 616.1V621.3M429.5 616.1V621.2M430.5 616.8V621.2M431.5 616.8V621.3M432.5 616.9V621.4M433.5 617.0V623.3M434.5 615.2V623.4M435.5 615.3V622.1M436.5 615.4V622.2M437.5 615.5V622.5M438.5 617.4V622.5M439.5 617.5V622.6M440.5 617.6V622.7M441.5 617.7V622.8M442.5 617.7V622.9M443.5 617.8V623.0M444.5 618.1V623.1M445.5 618.1V623.2M446.5 618.2V623.2M447.5 617.8V623.3M448.5 617.8V623.4M449.5 617.9V624.4M450.5 618.0V624.5M451.5 618.0V624.6M452.5 618.1V624.6M453.5 618.2V624.7M454.5 618.3V623.6M455.5 618.8V623.7M456.5 618.9V623.6M457.5 618.4V623.7M458.5 618.5V623.8M459.5 619.3V623.9M460.5 619.3V624.0M461.5 619.4V624.1M462.5 619.5V624.3M463.5 619.6V624.4M464.5 619.7V624.5M465.5 619.8V624.5M466.5 619.8V624.5M467.5 619.9V624.6M468.5 620.0V624.7M469.5 619.7V624.2M470.5 619.8V624.3M471.5 619.9V624.4M472.5 620.3V624.5M473.5 620.4V624.5M474.5 620.5V624.6M475.5 620.6V625.3M476.5 620.7V625.3M477.5 620.6V625.4M478.5 620.7V625.5M479.5 620.8V625.6M480.5 618.9V625.8M481.5 619.0V625.9M482.5 620.5V626.0M483.5 620.6V626.1M484.5 620.7V626.1M485.5 620.8V626.2M486.5 620.9V626.4M487.5 621.0V626.5M488.5 620.5V626.1M489.5 620.6V626.2M490.5 619.9V626.3M491.5 620.0V626.4M492.5 620.1V626.5M493.5 622.1V626.9M494.5 622.2V627.0M495.5 622.3V627.1M496.5 622.4V627.2M497.5 622.5V627.3M498.5 622.6V627.4M499.5 622.7V627.5M500.5 622.8V627.6M501.5 622.9V627.7M502.5 623.0V627.9M503.5 622.9V628.0M504.5 623.0V628.1M505.5 623.1V627.9M506.5 623.2V628.0M507.5 623.3V628.1M508.5 621.6V628.2M509.5 621.7V628.2M510.5 621.8V628.3M511.5 624.0V628.4M512.5 624.0V628.5M513.5 624.2V628.6M514.5 624.3V628.7M515.5 624.4V628.8M516.5 624.5V628.9M517.5 624.1V629.0M518.5 624.2V629.2M519.5 624.3V629.3M520.5 624.4V629.4M521.5 624.3V629.5M522.5 624.4V629.8M523.5 624.5V629.9M524.5 624.6V629.8M525.5 624.1V629.9M526.5 624.2V630.0M527.5 624.3V630.1M528.5 625.0V631.0M529.5 625.1V631.1M530.5 625.2V631.2M531.5 625.3V631.3M532.5 626.0V631.4M533.5 626.1V631.0M534.5 626.2V631.1M535.5 626.3V631.2M536.5 626.4V631.3M537.5 626.5V631.4M538.5 626.3V631.5M539.5 626.4V631.3M540.5 626.5V631.5M541.5 626.6V631.6M542.5 626.7V632.1M543.5 626.7V632.1M544.5 625.6V632.1M545.5 625.6V632.1M546.5 626.2V632.1M547.5 626.2V632.1M548.5 626.2V631.7M549.5 626.2V631.7M550.5 626.2V631.7M551.5 626.2V633.7M552.5 626.5V633.7M553.5 626.5V633.7M554.5 626.5V633.7M555.5 626.5V633.7M556.5 626.5V633.7M557.5 627.1V632.1M558.5 627.1V632.1M559.5 626.2V632.1M560.5 626.2V632.2M561.5 626.2V632.2M562.5 626.2V632.2M563.5 626.5V631.9M564.5 626.5V631.9M565.5 627.0V631.7M566.5 627.0V631.8M567.5 627.0V631.8M568.5 626.2V632.1M569.5 626.2V632.1M570.5 626.2V632.1M571.5 626.2V632.1M572.5 627.3V632.1M573.5 627.3V632.1M574.5 627.3V632.2M575.5 627.3V632.2M576.5 627.3V632.3M577.5 625.9V632.3M578.5 625.9V632.3M579.5 626.5V632.5M580.5 626.5V632.5M581.5 626.5V632.5M582.5 626.5V632.5M583.5 626.5V632.4M584.5 626.5V632.4M585.5 626.0V633.7M586.5 626.0V633.7M587.5 627.4V633.7M588.5 627.4V633.7M589.5 627.4V633.7M590.5 627.4V633.7M591.5 625.4V632.2M592.5 625.4V632.2M593.5 625.4V632.3M594.5 625.4V632.3M595.5 625.4V632.3M596.5 627.0V632.8M597.5 627.0V632.8M598.5 627.1V632.8M599.5 627.1V632.8M600.5 627.1V632.8M601.5 626.8V632.8M602.5 626.8V632.7M603.5 626.8V632.7M604.5 626.8V632.7M605.5 626.8V632.9M606.5 626.8V632.9M607.5 626.9V632.9M608.5 626.9V632.9M609.5 626.9V632.9M610.5 627.0V632.9M611.5 627.0V632.6M612.5 627.4V632.6M613.5 627.4V632.6M614.5 627.4V632.6M615.5 627.4V632.6M616.5 627.5V634.4M617.5 627.5V634.4M618.5 627.5V634.4M619.5 627.5V632.3M620.5 627.6V632.3M621.5 627.6V632.8M622.5 627.6V632.8M623.5 627.8V632.8M624.5 627.8V632.8M625.5 626.6V632.7M626.5 626.6V632.7M627.5 626.6V632.6M628.5 626.6V632.6M629.5 626.6V632.6M630.5 626.3V632.6M631.5 626.3V632.6M632.5 626.3V632.7M633.5 626.1V632.7M634.5 626.1V632.8M635.5 626.2V632.8M636.5 626.2V632.8M637.5 626.2V632.8M638.5 627.5V633.0M639.5 627.5V633.0M640.5 627.5V633.9M641.5 627.3V633.6M642.5 627.0V632.2M643.5 626.5V631.9M644.5 626.2V631.8M645.5 626.0V631.5M646.5 625.7V631.3M647.5 625.4V631.0M648.5 625.1V630.3M649.5 623.4V630.1M650.5 623.2V629.8M651.5 624.6V629.5M652.5 624.4V630.0M653.5 624.1V629.7M654.5 623.8V629.5M655.5 623.5V629.2M656.5 623.2V628.5M657.5 623.0V628.2M658.5 622.7V627.9M659.5 622.6V627.7M660.5 622.3V628.0M661.5 622.0V627.8M662.5 622.0V628.0M663.5 622.0V628.0M664.5 622.0V628.0M665.5 622.0V628.0M666.5 623.4V628.2M667.5 623.4V628.2M668.5 623.3V628.2M669.5 623.3V628.2M670.5 623.5V628.2M671.5 623.5V628.4M672.5 623.5V628.4M673.5 623.5V628.4M674.5 622.8V628.4M675.5 622.8V628.4M676.5 622.8V628.2M677.5 622.3V628.2M678.5 622.3V628.2M679.5 622.3V628.2M680.5 622.3V628.2M681.5 623.4V628.2M682.5 623.4V628.2M683.5 623.4V628.2M684.5 623.4V628.2M685.5 623.4V628.9M686.5 623.4V628.9M687.5 621.9V629.2M688.5 621.9V629.2M689.5 621.9V629.2M690.5 623.4V629.2M691.5 623.4V629.2M692.5 623.4V627.6M693.5 623.4V627.6M694.5 621.8V628.2M695.5 621.8V628.2M696.5 621.8V627.6M697.5 621.8V627.6M698.5 621.8V627.5M699.5 621.8V627.5M700.5 622.9V627.5M701.5 622.9V627.5M702.5 622.9V627.5M703.5 622.9V627.9M704.5 622.9V627.9M705.5 623.3V627.9M706.5 623.3V627.9M707.5 623.3V627.9M708.5 622.0V627.9M709.5 622.0V629.2M710.5 622.0V629.2M711.5 622.7V629.2M712.5 622.7V628.0M713.5 622.7V628.0M714.5 622.7V628.0M715.5 622.7V628.0M716.5 622.7V628.0M717.5 623.2V627.9M718.5 623.2V627.9M719.5 623.2V627.9M720.5 622.9V627.9M721.5 622.9V627.9M722.5 623.2V627.9M723.5 623.2V628.3M724.5 623.2V628.3M725.5 623.2V627.6M726.5 623.2V627.6M727.5 623.2V627.6M728.5 623.1V628.0M729.5 623.1V628.0M730.5 623.1V628.0M731.5 623.1V628.0M732.5 623.1V628.0M733.5 622.6V627.6M734.5 622.6V627.6M735.5 622.6V627.6M736.5 622.6V627.6M737.5 622.6V627.6M738.5 622.6V627.9M739.5 622.9V627.9M740.5 622.9V628.1M741.5 622.9V628.1M742.5 622.9V628.1M743.5 622.5V628.1M744.5 622.5V628.1M745.5 622.5V627.6M746.5 622.5V627.6M747.5 623.2V627.6M748.5 623.2V627.6M749.5 623.2V627.6M750.5 623.2V627.6M751.5 623.2V628.9M752.5 622.7V628.9M753.5 622.7V628.9M754.5 623.2V628.9M755.5 623.2V627.6M756.5 623.2V627.6M757.5 623.2V627.6M758.5 623.2V627.6M759.5 623.2V627.6M760.5 622.6V627.5M761.5 622.6V627.5M762.5 621.7V629.5M763.5 621.7V629.5M764.5 622.6V629.5M765.5 622.6V627.7M766.5 622.6V628.0M767.5 622.6V628.0M768.5 622.6V627.6M769.5 622.6V627.6M770.5 621.8V627.6M771.5 621.8V627.9M772.5 623.4V627.9M773.5 623.4V627.9M774.5 623.4V627.9M775.5 623.4V627.9M776.5 623.4V627.9M777.5 623.0V627.9M778.5 623.0V629.2M779.5 623.0V629.2M780.5 622.0V628.0M781.5 622.0V628.0M782.5 622.0V628.0M783.5 622.0V628.0M784.5 622.0V628.0M785.5 622.0V628.0M786.5 623.3V628.8M787.5 623.3V628.8M788.5 622.7V628.8M789.5 622.7V628.8M790.5 623.2V628.8M791.5 623.2V628.8M792.5 623.2V628.4M793.5 623.2V628.4M794.5 623.2V628.4M795.5 623.2V627.7M796.5 623.3V627.7M797.5 623.3V627.7M798.5 623.3V627.6M799.5 623.3V627.6M800.5 621.8V627.6M801.5 621.8V627.6M802.5 621.8V627.6M803.5 623.1V628.2M804.5 623.1V628.2M805.5 623.1V627.7M806.5 623.1V627.7M807.5 622.9V627.7M808.5 622.9V627.7M809.5 622.9V627.7M810.5 622.9V627.7M811.5 622.9V628.5M812.5 622.9V628.5M813.5 622.8V627.9M814.5 622.8V627.9M815.5 623.4V628.1M816.5 623.4V628.1M817.5 623.4V628.1M818.5 623.4V628.1M819.5 623.4V628.1M820.5 623.4V628.7M821.5 623.4V628.7M822.5 623.4V628.7M823.5 623.4V627.5M824.5 623.4V627.8M825.5 623.4V627.8M826.5 622.9V627.8M827.5 622.9V627.8M828.5 622.9V627.8M829.5 622.9V627.8M830.5 623.2V628.0M831.5 621.8V628.0M832.5 621.8V628.0M833.5 621.8V628.0M834.5 623.2V628.0M835.5 623.3V628.5M836.5 623.3V628.5M837.5 623.3V628.5M838.5 623.3V628.5M839.5 623.3V628.5M840.5 623.3V628.5M841.5 622.1V627.7M842.5 622.1V627.7M843.5 622.1V627.7M844.5 622.1V629.0M845.5 623.4V629.0M846.5 623.4V629.0M847.5 623.4V629.0M848.5 623.4V627.9M849.5 622.9V627.9M850.5 622.9V627.9M851.5 623.1V627.9M852.5 623.1V627.9M853.5 623.1V627.9M854.5 623.1V627.9M855.5 623.1V627.9M856.5 623.1V627.9M857.5 623.4V627.9M858.5 623.4V629.0M859.5 623.4V629.0M860.5 623.4V629.0M861.5 623.4V629.0M862.5 623.4V629.1M863.5 623.4V629.1M864.5 623.4V627.6M865.5 623.3V628.6M866.5 622.4V628.6M867.5 622.4V628.6M868.5 622.4V628.6M869.5 622.4V627.8M870.5 623.5V627.8M871.5 623.5V627.7M872.5 623.5V627.7M873.5 623.5V628.2M874.5 621.9V628.2M875.5 621.9V628.0M876.5 623.1V628.0M877.5 623.1V628.0M878.5 622.7V628.0M879.5 621.9V628.0M880.5 621.9V628.0M881.5 622.7V628.0M882.5 622.7V628.0M883.5 623.0V628.0M884.5 623.0V628.0M885.5 623.0V628.3M886.5 623.0V628.3M887.5 623.0V628.3M888.5 623.3V628.3M889.5 623.3V628.3M890.5 621.7V628.3M891.5 621.7V628.3M892.5 623.4V628.3M893.5 623.4V627.7M894.5 623.4V627.7M895.5 623.4V627.7M896.5 623.4V627.7M897.5 623.4V627.7M898.5 623.5V627.7M899.5 623.5V628.2M900.5 623.5V628.2M901.5 623.3V628.2M902.5 623.3V628.2M903.5 623.3V628.2M904.5 622.6V628.2M905.5 622.6V628.5M906.5 622.6V628.5M907.5 622.3V628.5M908.5 622.3V627.6M909.5 622.3V627.6M910.5 622.3V627.6M911.5 622.9V627.6M912.5 622.9V627.6M913.5 623.2V627.6M914.5 623.2V627.6M915.5 622.1V627.8M916.5 622.1V627.8M917.5 623.1V627.8M918.5 623.1V627.8M919.5 623.1V627.8M920.5 623.1V627.6M921.5 623.1V627.6M922.5 623.1V627.6M923.5 622.9V629.2M924.5 622.9V629.2M925.5 622.7V627.5M926.5 622.7V627.5M927.5 622.7V627.5M928.5 622.7V627.5M929.5 622.7V627.5M930.5 622.7V628.8M931.5 623.3V628.8M932.5 623.3V628.3M933.5 623.3V628.3M934.5 623.3V628.3M935.5 623.3V627.8M936.5 623.1V627.8M937.5 623.1V627.8M938.5 623.1V627.7M939.5 623.1V627.7M940.5 623.1V628.2M941.5 623.0V628.2M942.5 623.0V628.2M943.5 623.3V629.2M944.5 622.6V629.2M945.5 622.6V629.2M946.5 622.6V629.2M947.5 622.8V628.7M948.5 622.8V628.7M949.5 622.8V629.1M950.5 622.8V629.1M951.5 622.8V629.1M952.5 623.3V627.9M953.5 623.3V627.9M954.5 623.3V627.9M955.5 623.3V627.9M956.5 621.8V627.8M957.5 621.8V627.8M958.5 621.8V627.8M959.5 623.2V627.8M960.5 623.2V627.8M961.5 623.2V628.1" stroke="#ff0000" stroke-width="1" fill="none" opacity="1"/><path d="M93 527.5H962" stroke="#1a1a1a" stroke-width="1.4"/><path d="M94 527V761" stroke="#8a8a8a" stroke-width="2.4"/><path d="M961 527V761" stroke="#8a8a8a" stroke-width="2.2"/><path d="M93 760.5H962" stroke="#1a1a1a" stroke-width="1.6"/><path d="M93.5 761V766M102.5 761V764M110.5 761V764M119.5 761V764M128.5 761V764M136.5 761V766M145.5 761V764M154.5 761V764M162.5 761V764M171.5 761V764M180.5 761V766M189.5 761V764M197.5 761V764M206.5 761V764M215.5 761V764M223.5 761V766M232.5 761V764M241.5 761V764M249.5 761V764M258.5 761V764M267.5 761V766M275.5 761V764M284.5 761V764M293.5 761V764M301.5 761V764M310.5 761V766M319.5 761V764M327.5 761V764M336.5 761V764M345.5 761V764M353.5 761V766M362.5 761V764M371.5 761V764M380.5 761V764M388.5 761V764M397.5 761V766M406.5 761V764M414.5 761V764M423.5 761V764M432.5 761V764M440.5 761V766M449.5 761V764M458.5 761V764M466.5 761V764M475.5 761V764M484.5 761V766M492.5 761V764M501.5 761V764M510.5 761V764M518.5 761V764M527.5 761V766M536.5 761V764M544.5 761V764M553.5 761V764M562.5 761V764M571.5 761V766M579.5 761V764M588.5 761V764M597.5 761V764M605.5 761V764M614.5 761V766M623.5 761V764M631.5 761V764M640.5 761V764M649.5 761V764M657.5 761V766M666.5 761V764M675.5 761V764M683.5 761V764M692.5 761V764M701.5 761V766M709.5 761V764M718.5 761V764M727.5 761V764M735.5 761V764M744.5 761V766M753.5 761V764M762.5 761V764M770.5 761V764M779.5 761V764M788.5 761V766M796.5 761V764M805.5 761V764M814.5 761V764M822.5 761V764M831.5 761V766M840.5 761V764M848.5 761V764M857.5 761V764M866.5 761V764M874.5 761V766M883.5 761V764M892.5 761V764M900.5 761V764M909.5 761V764M918.5 761V766M926.5 761V764M935.5 761V764M944.5 761V764M953.5 761V764M961.5 761V766M88 538.5H93M88 630.5H93M88 721.5H93M90 556.5H93M90 575.5H93M90 593.5H93M90 611.5H93M90 648.5H93M90 666.5H93M90 685.5H93M90 703.5H93M90 740.5H93M90 758.5H93" stroke="#2a2a2a" stroke-width="1.3" fill="none"/></svg><div class="t" style="left:123.40px;top:419.25px;font-size:14.83px;line-height:14.83px;color:#555555;transform:scaleX(1.0000)">1</div><div class="t" style="left:167.59px;top:419.25px;font-size:14.83px;line-height:14.83px;color:#555555;transform:scaleX(1.0000)">2</div><div class="t" style="left:211.63px;top:419.25px;font-size:14.83px;line-height:14.83px;color:#555555;transform:scaleX(1.0000)">3</div><div class="t" style="left:255.60px;top:419.25px;font-size:14.83px;line-height:14.83px;color:#555555;transform:scaleX(1.0000)">4</div><div class="t" style="left:299.50px;top:419.25px;font-size:14.83px;line-height:14.83px;color:#555555;transform:scaleX(1.0000)">5</div><div class="t" style="left:343.47px;top:419.25px;font-size:14.83px;line-height:14.83px;color:#555555;transform:scaleX(1.0000)">6</div><div class="t" style="left:387.44px;top:419.25px;font-size:14.83px;line-height:14.83px;color:#555555;transform:scaleX(1.0000)">7</div><div class="t" style="left:431.48px;top:419.25px;font-size:14.83px;line-height:14.83px;color:#555555;transform:scaleX(1.0000)">8</div><div class="t" style="left:475.38px;top:419.25px;font-size:14.83px;line-height:14.83px;color:#555555;transform:scaleX(1.0000)">9</div><div class="t" style="left:514.90px;top:419.25px;font-size:14.83px;line-height:14.83px;color:#555555;transform:scaleX(1.0000)">10</div><div class="t" style="left:559.54px;top:419.25px;font-size:14.83px;line-height:14.83px;color:#555555;transform:scaleX(1.0000)">11</div><div class="t" style="left:602.92px;top:419.25px;font-size:14.83px;line-height:14.83px;color:#555555;transform:scaleX(1.0000)">12</div><div class="t" style="left:646.89px;top:419.25px;font-size:14.83px;line-height:14.83px;color:#555555;transform:scaleX(1.0000)">13</div><div class="t" style="left:690.71px;top:419.25px;font-size:14.83px;line-height:14.83px;color:#555555;transform:scaleX(1.0000)">14</div><div class="t" style="left:734.75px;top:419.25px;font-size:14.83px;line-height:14.83px;color:#555555;transform:scaleX(1.0000)">15</div><div class="t" style="left:778.80px;top:419.25px;font-size:14.83px;line-height:14.83px;color:#555555;transform:scaleX(1.0000)">16</div><div class="t" style="left:822.77px;top:419.25px;font-size:14.83px;line-height:14.83px;color:#555555;transform:scaleX(1.0000)">17</div><div class="t" style="left:866.74px;top:419.25px;font-size:14.83px;line-height:14.83px;color:#555555;transform:scaleX(1.0000)">18</div><div class="t" style="left:910.71px;top:419.25px;font-size:14.83px;line-height:14.83px;color:#555555;transform:scaleX(1.0000)">19</div><div class="t" style="left:954.82px;top:419.25px;font-size:14.83px;line-height:14.83px;color:#555555;transform:scaleX(1.0000)">20</div><div class="t" style="left:67.44px;top:195.65px;font-size:14.53px;line-height:14.53px;color:#555555;transform:scaleX(1.0000)">5</div><div class="t" style="left:67.44px;top:278.30px;font-size:14.53px;line-height:14.53px;color:#555555;transform:scaleX(1.0000)">0</div><div class="t" style="left:62.65px;top:360.95px;font-size:14.53px;line-height:14.53px;color:#555555;transform:scaleX(1.0000)">-5</div><div class="t" style="left:452.89px;top:442.84px;font-size:19.33px;line-height:19.33px;color:#444444;transform:scaleX(1.0674);">Time (seconds)</div><div class="t" style="left:47.70px;top:318.19px;font-size:22.53px;line-height:22.53px;color:#555555;transform-origin:0 19.07px;transform:rotate(-90deg) scaleX(0.9204)">Force (N)</div><svg style="left:1002px;top:281px" width="21" height="22" viewBox="0 0 21 22"><rect x="1" y="1" width="19" height="20" fill="#0080ff" stroke="#6b6b6b" stroke-width="2"/><path d="M4.5 11.5l3.5 3.5 8-8.5" fill="none" stroke="#fff" stroke-width="2.2"/></svg><div class="t" style="left:1032.61px;top:284.24px;font-size:17.44px;line-height:17.44px;color:#2a8a2a;transform:scaleX(0.7840);">FX</div><svg style="left:1002px;top:312px" width="21" height="22" viewBox="0 0 21 22"><rect x="1" y="1" width="19" height="20" fill="#0080ff" stroke="#6b6b6b" stroke-width="2"/><path d="M4.5 11.5l3.5 3.5 8-8.5" fill="none" stroke="#fff" stroke-width="2.2"/></svg><div class="t" style="left:1032.61px;top:315.74px;font-size:17.44px;line-height:17.44px;color:#3c3cff;transform:scaleX(0.7840);">FY</div><svg style="left:1002px;top:344px" width="21" height="22" viewBox="0 0 21 22"><rect x="1" y="1" width="19" height="20" fill="#0080ff" stroke="#6b6b6b" stroke-width="2"/><path d="M4.5 11.5l3.5 3.5 8-8.5" fill="none" stroke="#fff" stroke-width="2.2"/></svg><div class="t" style="left:1032.55px;top:347.24px;font-size:17.44px;line-height:17.44px;color:#ff1010;transform:scaleX(0.8264);">FZ</div><svg style="left:17px;top:475px" width="23" height="23" viewBox="0 0 23 23"><rect width="23" height="23" fill="#0080ff"/><circle cx="7.5" cy="7.7" r="6.6" fill="none" stroke="#1b2233" stroke-width="1.4"/><path d="M7.5 3.8v7.8M3.6 7.7h7.8" stroke="#1b2233" stroke-width="1.8"/><path d="M14.8 14.8l7 6.8" stroke="#1b2233" stroke-width="2.8"/><path d="M4.3 20.7l17-17" stroke="#ef2b45" stroke-width="1.2"/></svg><svg style="left:45px;top:475px" width="24" height="23" viewBox="0 0 24 23"><rect width="24" height="23" fill="#d1d7e3"/><path d="M0.9 15.2L2.8 13.6H6.4V4.2Q6.4 2.2 8.4 2.2Q10.4 2.2 10.4 4.2V2.6Q10.4 0.9 12.2 0.9Q14 0.9 14 2.6V3.3Q14 1.7 15.7 1.7Q17.3 1.7 17.3 3.3V5.2Q17.5 3.6 19.5 3.6Q21.6 3.6 21.6 5.6V18Q21.6 22.2 17 22.2H11Q8.6 22.2 6.6 20.4Z" fill="#d1d7e3" stroke="#1b2233" stroke-width="1.3" stroke-linejoin="round"/><path d="M10.4 4v8M14 3v9M17.3 4.5v7.5" stroke="#1b2233" stroke-width="1.2"/></svg><svg style="left:74px;top:475px" width="23" height="23" viewBox="0 0 23 23"><rect width="23" height="23" fill="#d1d7e3"/><path d="M0.8 0.6v21.7h21.6" fill="none" stroke="#1b2233" stroke-width="1.5"/><path d="M0.8 0.8h3.6M0.8 8.1h3.6M0.8 15h3.6M7.9 22.3v-3M15 22.3v-3M22.2 22.3v-3" stroke="#1b2233" stroke-width="1.5"/></svg><svg style="left:103px;top:475px" width="23" height="23" viewBox="0 0 23 23"><rect width="23" height="23" fill="#d1d7e3"/><circle cx="9.9" cy="9.6" r="8.2" fill="none" stroke="#1b2233" stroke-width="1.3"/><path d="M5.4 8.5l4.2 4.2M9.6 8.5l-4.2 4.2" stroke="#1b2233" stroke-width="1.6"/><path d="M13.5 5.5v8.1M12.2 6.3l1.3-0.8" stroke="#1b2233" stroke-width="1.4"/><path d="M15.8 16.3l5.9 5.1" stroke="#1b2233" stroke-width="2.5"/></svg><div class="t" style="left:132.54px;top:769.25px;font-size:14.83px;line-height:14.83px;color:#555555;transform:scaleX(1.0000)">1</div><div class="t" style="left:176.17px;top:769.25px;font-size:14.83px;line-height:14.83px;color:#555555;transform:scaleX(1.0000)">2</div><div class="t" style="left:219.65px;top:769.25px;font-size:14.83px;line-height:14.83px;color:#555555;transform:scaleX(1.0000)">3</div><div class="t" style="left:263.06px;top:769.25px;font-size:14.83px;line-height:14.83px;color:#555555;transform:scaleX(1.0000)">4</div><div class="t" style="left:306.40px;top:769.25px;font-size:14.83px;line-height:14.83px;color:#555555;transform:scaleX(1.0000)">5</div><div class="t" style="left:349.81px;top:769.25px;font-size:14.83px;line-height:14.83px;color:#555555;transform:scaleX(1.0000)">6</div><div class="t" style="left:393.22px;top:769.25px;font-size:14.83px;line-height:14.83px;color:#555555;transform:scaleX(1.0000)">7</div><div class="t" style="left:436.70px;top:769.25px;font-size:14.83px;line-height:14.83px;color:#555555;transform:scaleX(1.0000)">8</div><div class="t" style="left:480.04px;top:769.25px;font-size:14.83px;line-height:14.83px;color:#555555;transform:scaleX(1.0000)">9</div><div class="t" style="left:519.00px;top:769.25px;font-size:14.83px;line-height:14.83px;color:#555555;transform:scaleX(1.0000)">10</div><div class="t" style="left:563.08px;top:769.25px;font-size:14.83px;line-height:14.83px;color:#555555;transform:scaleX(1.0000)">11</div><div class="t" style="left:605.90px;top:769.25px;font-size:14.83px;line-height:14.83px;color:#555555;transform:scaleX(1.0000)">12</div><div class="t" style="left:649.31px;top:769.25px;font-size:14.83px;line-height:14.83px;color:#555555;transform:scaleX(1.0000)">13</div><div class="t" style="left:692.57px;top:769.25px;font-size:14.83px;line-height:14.83px;color:#555555;transform:scaleX(1.0000)">14</div><div class="t" style="left:736.05px;top:769.25px;font-size:14.83px;line-height:14.83px;color:#555555;transform:scaleX(1.0000)">15</div><div class="t" style="left:779.54px;top:769.25px;font-size:14.83px;line-height:14.83px;color:#555555;transform:scaleX(1.0000)">16</div><div class="t" style="left:822.95px;top:769.25px;font-size:14.83px;line-height:14.83px;color:#555555;transform:scaleX(1.0000)">17</div><div class="t" style="left:866.36px;top:769.25px;font-size:14.83px;line-height:14.83px;color:#555555;transform:scaleX(1.0000)">18</div><div class="t" style="left:909.77px;top:769.25px;font-size:14.83px;line-height:14.83px;color:#555555;transform:scaleX(1.0000)">19</div><div class="t" style="left:953.32px;top:769.25px;font-size:14.83px;line-height:14.83px;color:#555555;transform:scaleX(1.0000)">20</div><div class="t" style="left:69.30px;top:531.75px;font-size:14.53px;line-height:14.53px;color:#555555;transform:scaleX(1.0000)">50</div><div class="t" style="left:77.44px;top:623.40px;font-size:14.53px;line-height:14.53px;color:#555555;transform:scaleX(1.0000)">0</div><div class="t" style="left:64.51px;top:715.05px;font-size:14.53px;line-height:14.53px;color:#555555;transform:scaleX(1.0000)">-50</div><div class="t" style="left:457.39px;top:792.67px;font-size:20.35px;line-height:20.35px;color:#444444;transform:scaleX(1.0133);">Time (seconds)</div><div class="t" style="left:47.70px;top:696.36px;font-size:22.53px;line-height:22.53px;color:#555555;transform-origin:0 19.07px;transform:rotate(-90deg) scaleX(0.9492)">Torque (N·mm)</div><svg style="left:1002px;top:632px" width="21" height="22" viewBox="0 0 21 22"><rect x="1" y="1" width="19" height="20" fill="#0080ff" stroke="#6b6b6b" stroke-width="2"/><path d="M4.5 11.5l3.5 3.5 8-8.5" fill="none" stroke="#fff" stroke-width="2.2"/></svg><div class="t" style="left:1033.44px;top:634.74px;font-size:17.44px;line-height:17.44px;color:#2a8a2a;transform:scaleX(0.7458);">TX</div><svg style="left:1002px;top:663px" width="21" height="22" viewBox="0 0 21 22"><rect x="1" y="1" width="19" height="20" fill="#0080ff" stroke="#6b6b6b" stroke-width="2"/><path d="M4.5 11.5l3.5 3.5 8-8.5" fill="none" stroke="#fff" stroke-width="2.2"/></svg><div class="t" style="left:1033.44px;top:666.44px;font-size:17.44px;line-height:17.44px;color:#3c3cff;transform:scaleX(0.7458);">TY</div><svg style="left:1002px;top:695px" width="21" height="22" viewBox="0 0 21 22"><rect x="1" y="1" width="19" height="20" fill="#0080ff" stroke="#6b6b6b" stroke-width="2"/><path d="M4.5 11.5l3.5 3.5 8-8.5" fill="none" stroke="#fff" stroke-width="2.2"/></svg><div class="t" style="left:1033.43px;top:698.14px;font-size:17.44px;line-height:17.44px;color:#ff1010;transform:scaleX(0.7840);">TZ</div><svg style="left:17px;top:825px" width="23" height="23" viewBox="0 0 23 23"><rect width="23" height="23" fill="#0080ff"/><circle cx="7.5" cy="7.7" r="6.6" fill="none" stroke="#1b2233" stroke-width="1.4"/><path d="M7.5 3.8v7.8M3.6 7.7h7.8" stroke="#1b2233" stroke-width="1.8"/><path d="M14.8 14.8l7 6.8" stroke="#1b2233" stroke-width="2.8"/><path d="M4.3 20.7l17-17" stroke="#ef2b45" stroke-width="1.2"/></svg><svg style="left:45px;top:825px" width="24" height="23" viewBox="0 0 24 23"><rect width="24" height="23" fill="#d1d7e3"/><path d="M0.9 15.2L2.8 13.6H6.4V4.2Q6.4 2.2 8.4 2.2Q10.4 2.2 10.4 4.2V2.6Q10.4 0.9 12.2 0.9Q14 0.9 14 2.6V3.3Q14 1.7 15.7 1.7Q17.3 1.7 17.3 3.3V5.2Q17.5 3.6 19.5 3.6Q21.6 3.6 21.6 5.6V18Q21.6 22.2 17 22.2H11Q8.6 22.2 6.6 20.4Z" fill="#d1d7e3" stroke="#1b2233" stroke-width="1.3" stroke-linejoin="round"/><path d="M10.4 4v8M14 3v9M17.3 4.5v7.5" stroke="#1b2233" stroke-width="1.2"/></svg><svg style="left:74px;top:825px" width="23" height="23" viewBox="0 0 23 23"><rect width="23" height="23" fill="#d1d7e3"/><path d="M0.8 0.6v21.7h21.6" fill="none" stroke="#1b2233" stroke-width="1.5"/><path d="M0.8 0.8h3.6M0.8 8.1h3.6M0.8 15h3.6M7.9 22.3v-3M15 22.3v-3M22.2 22.3v-3" stroke="#1b2233" stroke-width="1.5"/></svg><svg style="left:103px;top:825px" width="23" height="23" viewBox="0 0 23 23"><rect width="23" height="23" fill="#d1d7e3"/><circle cx="9.9" cy="9.6" r="8.2" fill="none" stroke="#1b2233" stroke-width="1.3"/><path d="M5.4 8.5l4.2 4.2M9.6 8.5l-4.2 4.2" stroke="#1b2233" stroke-width="1.6"/><path d="M13.5 5.5v8.1M12.2 6.3l1.3-0.8" stroke="#1b2233" stroke-width="1.4"/><path d="M15.8 16.3l5.9 5.1" stroke="#1b2233" stroke-width="2.5"/></svg></body></html>
